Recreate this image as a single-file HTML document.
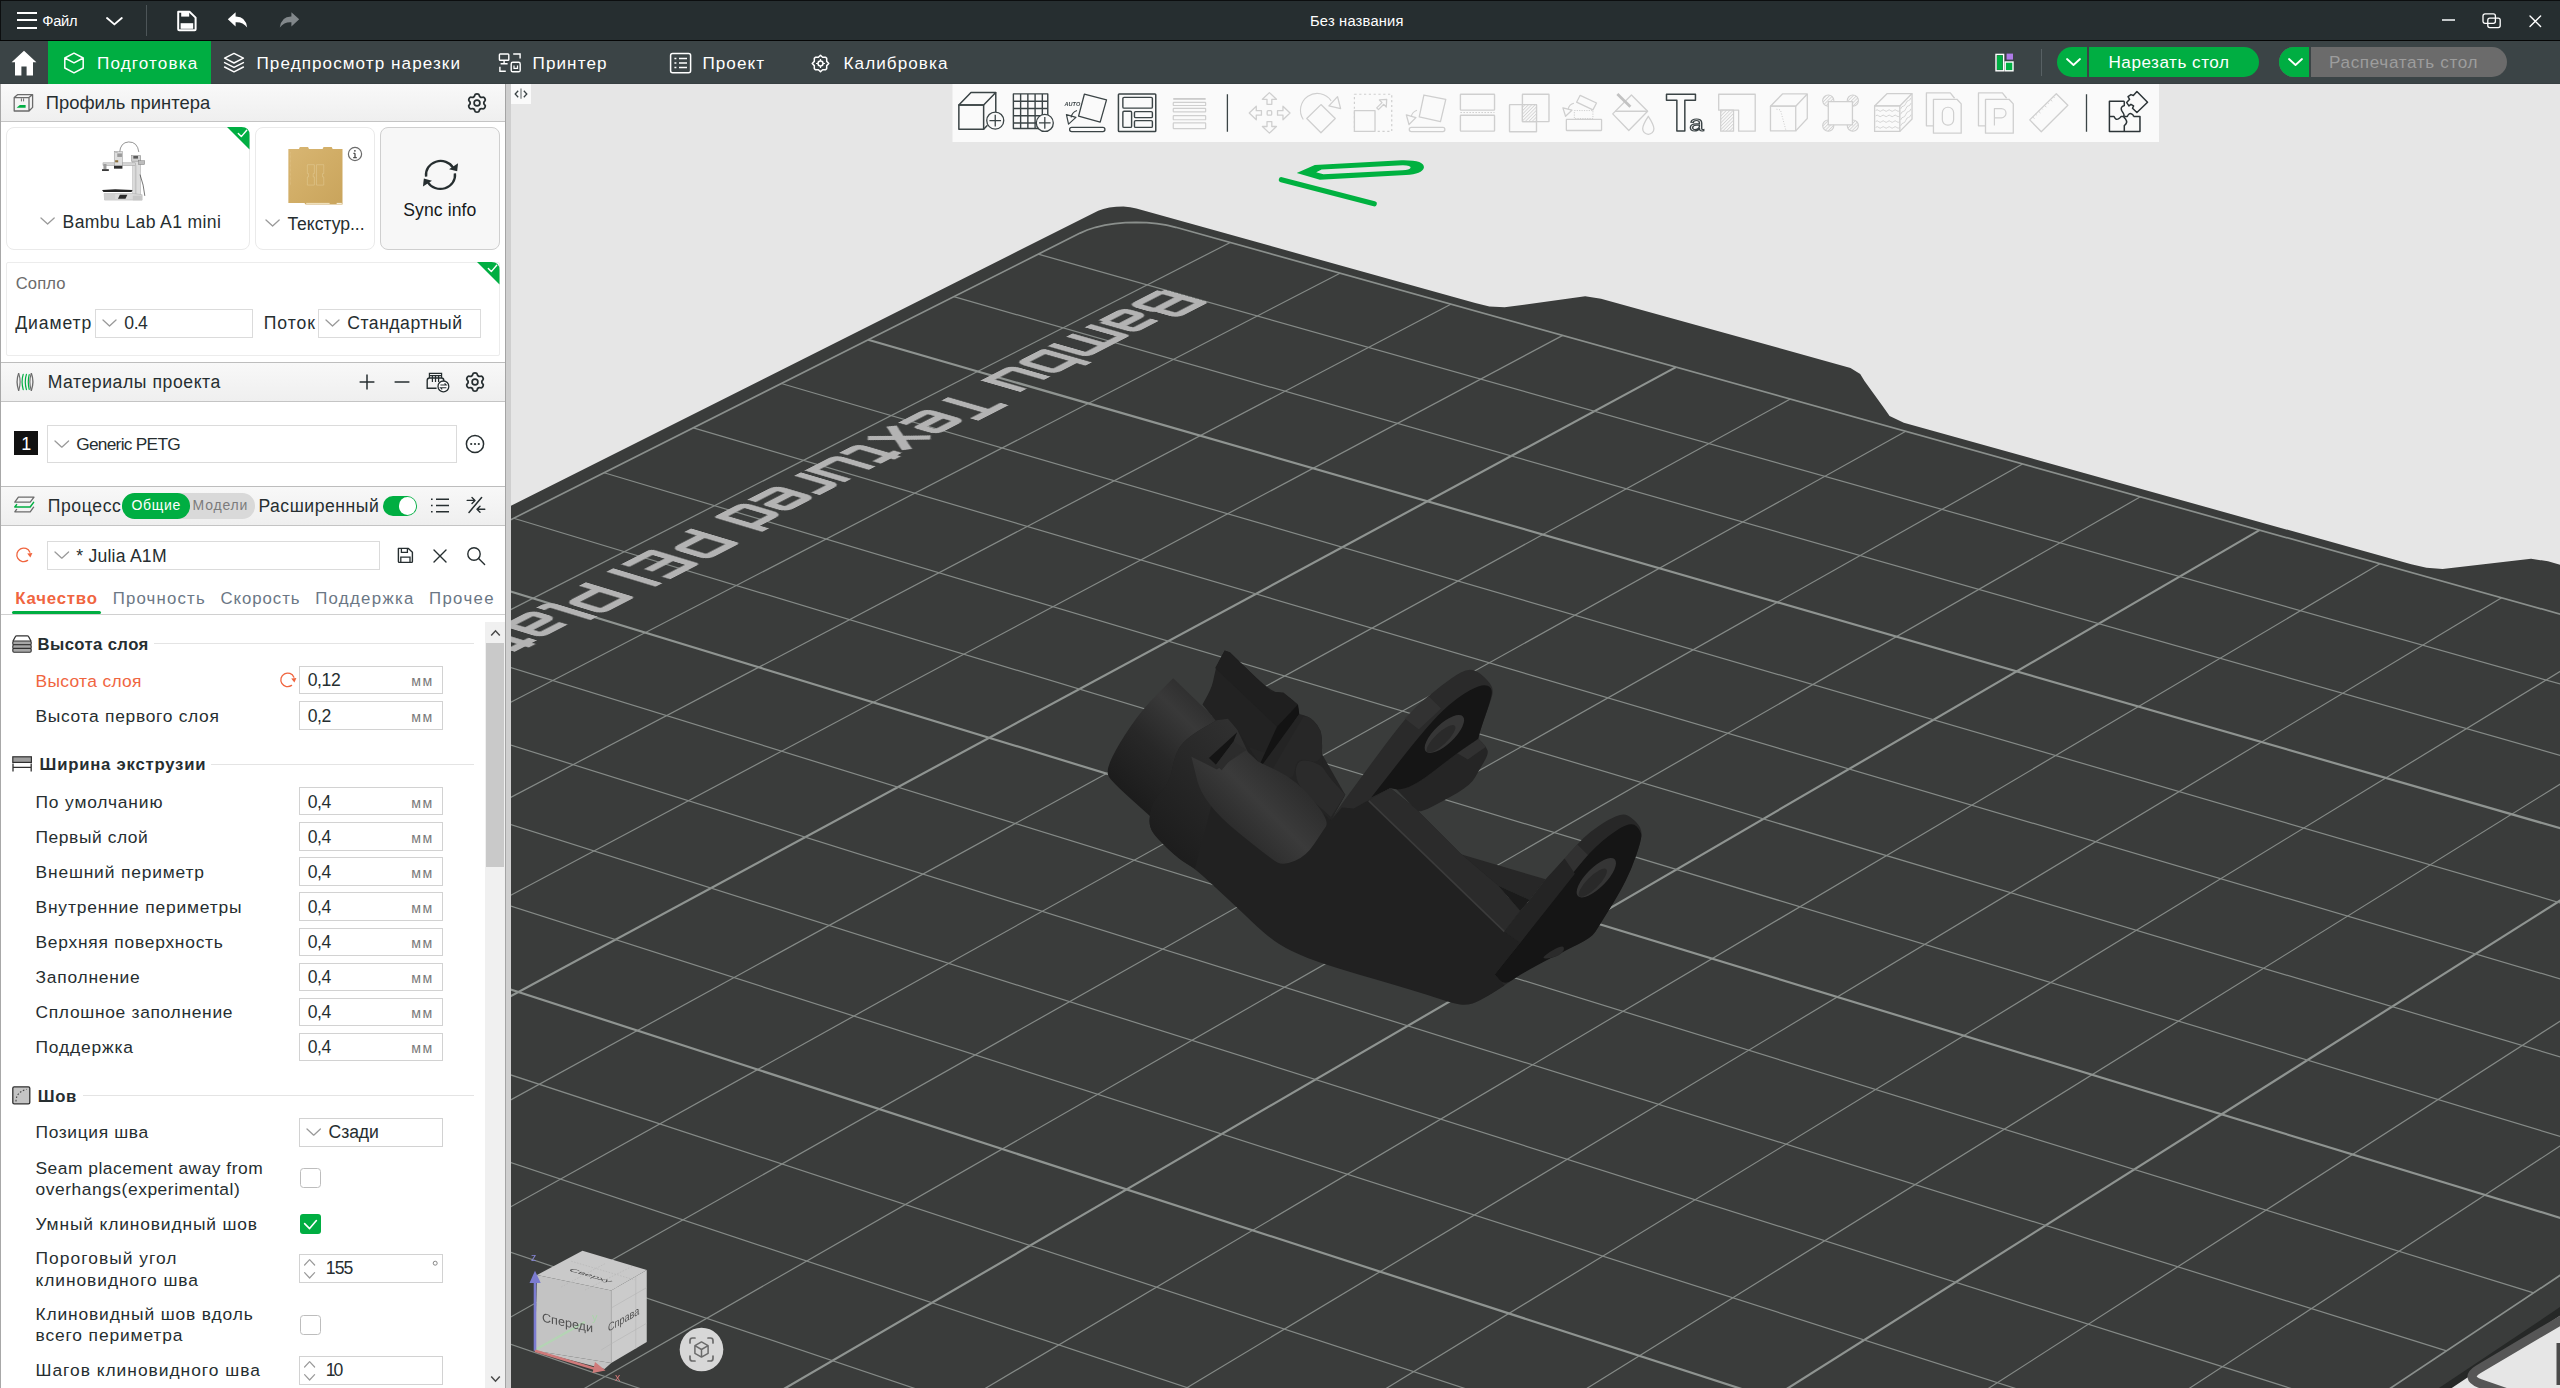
<!DOCTYPE html>
<html><head><meta charset="utf-8"><title>Bambu Studio</title><style>
html,body{margin:0;padding:0;}
body{width:2560px;height:1388px;overflow:hidden;position:relative;background:#e6e6e6;font-family:"Liberation Sans",sans-serif;}
.t{position:absolute;white-space:nowrap;}
.b{position:absolute;box-sizing:border-box;}
svg{overflow:visible;}
</style></head><body>
<div class="b" style="left:0.00px;top:0.00px;width:2560.00px;height:41.00px;background:#262e30;"></div>
<div class="b" style="left:0.00px;top:0.00px;width:2560.00px;height:1.00px;background:#0c0e0f;"></div>
<div class="b" style="left:0.00px;top:0.00px;width:1.00px;height:41.00px;background:#0c0e0f;"></div>
<div class="b" style="left:0.00px;top:40.00px;width:2560.00px;height:1.00px;background:#050606;"></div>
<div class="b" style="left:16.50px;top:12.20px;width:20.00px;height:2.00px;background:#fff;"></div>
<div class="b" style="left:16.50px;top:19.40px;width:20.00px;height:2.00px;background:#fff;"></div>
<div class="b" style="left:16.50px;top:26.60px;width:20.00px;height:2.00px;background:#fff;"></div>
<div class="t" style="left:42.20px;top:13px;font-size:14.70px;line-height:16px;height:16px;color:#fff;letter-spacing:-0.213px;">Файл</div>
<svg class="b" style="left:106.20px;top:17.30px;" width="16.8" height="8.4" viewBox="0 0 16.8 8.4"><polyline points="1,1 8.40,7.40 15.80,1" fill="none" stroke="#fff" stroke-width="1.9" stroke-linecap="round" stroke-linejoin="round"/></svg>
<div class="b" style="left:146.00px;top:5.00px;width:1.00px;height:31.00px;background:#4d5558;"></div>
<svg class="b" style="left:176.00px;top:10.00px;" width="22" height="22" viewBox="0 0 22 22"><path d="M2.2,1.8 H13.5 L19.6,7.6 V19.2 Q19.6,20.2 18.6,20.2 H3.2 Q2.2,20.2 2.2,19.2 Z" fill="none" stroke="#fff" stroke-width="2" stroke-linejoin="round"/><rect x="5.2" y="2" width="8" height="4.6" fill="#fff"/><rect x="4.6" y="13.2" width="12.6" height="5.6" fill="#fff"/></svg>
<svg class="b" style="left:227.00px;top:11.00px;" width="22" height="18" viewBox="0 0 22 18"><path d="M0.8,8.2 L8.6,1.2 V5.4 Q18.8,5.2 20.2,16.6 Q15.6,10.6 8.6,11.2 V15.4 Z" fill="#fff"/></svg>
<svg class="b" style="left:278.00px;top:11.00px;" width="22" height="18" viewBox="0 0 22 18"><path d="M21.2,8.2 L13.4,1.2 V5.4 Q3.2,5.2 1.8,16.6 Q6.4,10.6 13.4,11.2 V15.4 Z" fill="#82888b"/></svg>
<div class="t" style="left:1310.00px;top:13px;font-size:14.70px;line-height:16px;height:16px;color:#fff;letter-spacing:0.200px;">Без названия</div>
<div class="b" style="left:2442.00px;top:19.30px;width:13.00px;height:1.60px;background:#c4c8ca;"></div>
<svg class="b" style="left:2482.00px;top:13.00px;" width="20" height="16" viewBox="0 0 20 16"><rect x="1" y="0.9" width="12.4" height="9.4" rx="2" fill="none" stroke="#fff" stroke-width="1.3"/><rect x="5.8" y="5.2" width="12.4" height="9.4" rx="2" fill="none" stroke="#fff" stroke-width="1.3"/></svg>
<svg class="b" style="left:2528.50px;top:15.00px;" width="13" height="13" viewBox="0 0 13 13"><path d="M1,1 L11.6,11.6 M11.6,1 L1,11.6" stroke="#fff" stroke-width="1.4" stroke-linecap="round"/></svg>
<div class="b" style="left:0.00px;top:41.00px;width:2560.00px;height:43.00px;background:#3b4446;"></div>
<div class="b" style="left:0.00px;top:83.00px;width:2560.00px;height:1.00px;background:#373f41;"></div>
<svg class="b" style="left:10.50px;top:49.50px;" width="26" height="26" viewBox="0 0 26 26"><path d="M13,0.8 L25.4,12.2 H22 V25.4 H15.6 V16.4 H10.4 V25.4 H4 V12.2 H0.6 Z" fill="#fff"/></svg>
<div class="b" style="left:48.00px;top:41.00px;width:163.00px;height:43.00px;background:#00ae42;"></div>
<svg class="b" style="left:63.00px;top:52.00px;" width="22" height="22" viewBox="0 0 22 22"><path d="M11,1.2 L20.2,6 V16 L11,20.8 L1.8,16 V6 Z M1.8,6 L11,10.8 L20.2,6" fill="none" stroke="#fff" stroke-width="1.5" stroke-linejoin="round"/></svg>
<div class="t" style="left:97.00px;top:54px;font-size:17.10px;line-height:19px;height:19px;color:#fff;letter-spacing:1.135px;">Подготовка</div>
<svg class="b" style="left:223.00px;top:52.00px;" width="22" height="22" viewBox="0 0 22 22"><path d="M11,1.4 L20.4,6.2 L11,11 L1.6,6.2 Z" fill="none" stroke="#fff" stroke-width="1.5" stroke-linejoin="round"/><path d="M1.6,10.6 L11,15.4 L20.4,10.6 M1.6,15 L11,19.8 L20.4,15" fill="none" stroke="#fff" stroke-width="1.5" stroke-linejoin="round" stroke-linecap="round"/></svg>
<div class="t" style="left:256.50px;top:54px;font-size:17.10px;line-height:19px;height:19px;color:#fff;letter-spacing:1.070px;">Предпросмотр нарезки</div>
<svg class="b" style="left:498.00px;top:52.00px;" width="24" height="22" viewBox="0 0 24 22"><rect x="1.4" y="2" width="9.4" height="6.2" rx="0.8" fill="none" stroke="#fff" stroke-width="1.4"/><path d="M6.1,8.2 V11.6 M2.6,11.7 H9.6 M15.2,2 H22.1 V6.4 M1.9,14.7 V19.2 H7.8" fill="none" stroke="#fff" stroke-width="1.4"/><rect x="13.2" y="10.3" width="9" height="9.5" rx="1.6" fill="none" stroke="#fff" stroke-width="1.4"/><path d="M16,13.4 V16.4 H19.5 V13.4" fill="none" stroke="#fff" stroke-width="1.2"/></svg>
<div class="t" style="left:532.50px;top:54px;font-size:17.10px;line-height:19px;height:19px;color:#fff;letter-spacing:1.092px;">Принтер</div>
<svg class="b" style="left:669.00px;top:52.00px;" width="24" height="22" viewBox="0 0 24 22"><rect x="1.6" y="1.4" width="20" height="19.4" rx="2" fill="none" stroke="#fff" stroke-width="1.5"/><path d="M5.4,6.6 H7.4 M10,6.6 H18 M5.4,11.1 H7.4 M10,11.1 H18 M5.4,15.6 H7.4 M10,15.6 H18" stroke="#fff" stroke-width="1.5"/></svg>
<div class="t" style="left:702.50px;top:54px;font-size:17.10px;line-height:19px;height:19px;color:#fff;letter-spacing:1.036px;">Проект</div>
<svg class="b" style="left:811.00px;top:53.50px;" width="19" height="19" viewBox="0 0 19 19"><path d="M9.5,1.2 L11.6,3.3 H14.6 L15.7,4.4 V7.4 L17.8,9.5 L15.7,11.6 V14.6 L14.6,15.7 H11.6 L9.5,17.8 L7.4,15.7 H4.4 L3.3,14.6 V11.6 L1.2,9.5 L3.3,7.4 V4.4 L4.4,3.3 H7.4 Z" fill="none" stroke="#fff" stroke-width="1.5" stroke-linejoin="round"/><circle cx="9.5" cy="9.5" r="2.5" fill="none" stroke="#fff" stroke-width="1.5"/><path d="M9.5,5 V7 M9.5,12 V14 M5,9.5 H7 M12,9.5 H14" stroke="#fff" stroke-width="1.2"/></svg>
<div class="t" style="left:843.50px;top:54px;font-size:17.10px;line-height:19px;height:19px;color:#fff;letter-spacing:1.082px;">Калибровка</div>
<svg class="b" style="left:1994.50px;top:52.00px;" width="20" height="20" viewBox="0 0 20 20"><rect x="1" y="2.4" width="7.6" height="16.4" fill="none" stroke="#fff" stroke-width="1.4"/><rect x="2" y="3.4" width="5.6" height="14.4" fill="#00ae42"/><rect x="10.2" y="10" width="7.8" height="8.8" fill="#00ae42" stroke="#fff" stroke-width="1.4"/><rect x="11.6" y="1.6" width="6.4" height="6" fill="#af7be8"/></svg>
<div class="b" style="left:2041.00px;top:48.50px;width:1.00px;height:27.00px;background:#586164;"></div>
<div class="b" style="left:2056.50px;top:47.00px;width:202.50px;height:30.00px;background:#00ae42;border-radius:15px;"></div>
<div class="b" style="left:2086.50px;top:47.00px;width:2.50px;height:30.00px;background:#3b4446;"></div>
<svg class="b" style="left:2065.50px;top:57.50px;" width="15" height="8" viewBox="0 0 15 8"><polyline points="1,1 7.50,7.00 14.00,1" fill="none" stroke="#fff" stroke-width="1.8" stroke-linecap="round" stroke-linejoin="round"/></svg>
<div class="t" style="left:2108.50px;top:53px;font-size:17.10px;line-height:19px;height:19px;color:#fff;letter-spacing:0.520px;">Нарезать стол</div>
<div class="b" style="left:2278.50px;top:47.00px;width:228.00px;height:30.00px;background:#6b6b6b;border-radius:15px;"></div>
<div class="b" style="left:2278.50px;top:47.00px;width:30.00px;height:30.00px;background:#00ae42;border-radius:15px 0 0 15px;"></div>
<div class="b" style="left:2308.50px;top:47.00px;width:2.50px;height:30.00px;background:#3b4446;"></div>
<svg class="b" style="left:2287.50px;top:57.50px;" width="15" height="8" viewBox="0 0 15 8"><polyline points="1,1 7.50,7.00 14.00,1" fill="none" stroke="#fff" stroke-width="1.8" stroke-linecap="round" stroke-linejoin="round"/></svg>
<div class="t" style="left:2329.00px;top:53px;font-size:17.10px;line-height:19px;height:19px;color:#9d9d9d;letter-spacing:0.653px;">Распечатать стол</div>
<div class="b" style="left:0.00px;top:84.00px;width:505.00px;height:1304.00px;background:#fff;"></div>
<div class="b" style="left:0.00px;top:84.00px;width:1.20px;height:1304.00px;background:#a8a8a8;"></div>
<div class="b" style="left:505.00px;top:84.00px;width:6.00px;height:1304.00px;background:#cfcfcf;"></div>
<div class="b" style="left:505.00px;top:84.00px;width:1.00px;height:1304.00px;background:#a4a4a4;"></div>
<div class="b" style="left:1.00px;top:84.00px;width:504.00px;height:37.50px;background:linear-gradient(#f9f9f9,#efefef);border-bottom:1.5px solid #c4c4c4;"></div>
<svg class="b" style="left:12.50px;top:93.00px;" width="22" height="20" viewBox="0 0 22 20"><path d="M1.2,4.6 L4.8,1.6 H19.6 V14.4 L16,18 H1.2 Z M1.2,4.6 H16 V18 M16,4.6 L19.6,1.6" fill="none" stroke="#6b6b6b" stroke-width="1.3" stroke-linejoin="round"/><path d="M8.4,5.4 V8.4 M10.6,5.4 V8.4" stroke="#6b6b6b" stroke-width="1"/><path d="M3.6,14.8 L6.8,12 H12.6 V14.8 Z" fill="#00ae42"/></svg>
<div class="t" style="left:45.70px;top:92px;font-size:18.40px;line-height:21px;height:21px;color:#262e30;letter-spacing:0.033px;">Профиль принтера</div>
<svg class="b" style="left:467.30px;top:93.00px;" width="20" height="20" viewBox="0 0 20 20"><path d="M13.40,15.88 Q12.34,16.49 12.18,17.78 Q12.03,19.08 10.00,19.08 Q7.97,19.08 7.82,17.78 Q7.66,16.49 6.60,15.88 Q5.55,15.27 4.35,15.78 Q3.15,16.29 2.14,14.54 Q1.13,12.78 2.17,12.00 Q3.21,11.22 3.21,10.00 Q3.21,8.78 2.17,8.00 Q1.13,7.22 2.14,5.46 Q3.15,3.71 4.35,4.22 Q5.55,4.73 6.60,4.12 Q7.66,3.51 7.82,2.22 Q7.97,0.92 10.00,0.92 Q12.03,0.92 12.18,2.22 Q12.34,3.51 13.40,4.12 Q14.45,4.73 15.65,4.22 Q16.85,3.71 17.86,5.46 Q18.87,7.22 17.83,8.00 Q16.79,8.78 16.79,10.00 Q16.79,11.22 17.83,12.00 Q18.87,12.78 17.86,14.54 Q16.85,16.29 15.65,15.78 Q14.45,15.27 13.40,15.88 Z" fill="none" stroke="#262e30" stroke-width="1.8" stroke-linejoin="round"/><circle cx="10" cy="10" r="2.9" fill="none" stroke="#262e30" stroke-width="1.7"/></svg>
<div class="b" style="left:6.00px;top:127.00px;width:244.00px;height:123.00px;background:#fff;border:1.3px solid #eaeaea;border-radius:8px;"></div>
<svg class="b" style="left:226.70px;top:127.00px;" width="22.5" height="22.5" viewBox="0 0 22.5 22.5"><path d="M0,0 H14.5 Q22.5,0 22.5,8 V22.5 Z" fill="#00ae42"/><path d="M11.3,6.6 L14.3,9.6 L19.7,3.2" fill="none" stroke="#fff" stroke-width="1.4" stroke-linecap="round" stroke-linejoin="round"/></svg>
<div class="b" style="left:255.00px;top:127.00px;width:120.00px;height:123.00px;background:#fff;border:1.3px solid #eaeaea;border-radius:8px;"></div>
<div class="b" style="left:380.00px;top:127.00px;width:120.00px;height:123.00px;background:#f7f7f7;border:1.3px solid #cfcfcf;border-radius:8px;"></div>
<svg class="b" style="left:80.00px;top:130.00px;" width="300" height="120" viewBox="0 0 2560 1024">
<path d="M338,192 Q345,105 415,102 Q490,100 502,188" fill="none" stroke="#4a4a4a" stroke-width="5"/>
<rect x="450" y="222" width="68" height="350" fill="#dcdcdc" stroke="#a9a9a9" stroke-width="4"/>
<rect x="468" y="300" width="14" height="250" fill="#c4c4c4"/>
<rect x="438" y="218" width="78" height="48" fill="#cfcfcf" stroke="#8a8a8a" stroke-width="4"/>
<rect x="500" y="262" width="52" height="34" fill="#bdbdbd" stroke="#7a7a7a" stroke-width="4"/>
<rect x="455" y="222" width="40" height="22" fill="#5a5a5a"/>
<rect x="196" y="280" width="276" height="24" fill="#d6d6d6" stroke="#9a9a9a" stroke-width="4"/>
<rect x="292" y="184" width="70" height="122" fill="#dedede" stroke="#8f8f8f" stroke-width="4"/>
<rect x="300" y="180" width="22" height="16" fill="#bcbcbc"/>
<rect x="318" y="200" width="40" height="30" fill="#9a9a9a"/>
<rect x="300" y="258" width="26" height="18" fill="#8a6f3a"/>
<rect x="290" y="306" width="72" height="24" fill="#2e2e2e"/>
<rect x="200" y="290" width="26" height="46" fill="#9d9d9d"/>
<rect x="188" y="334" width="58" height="16" fill="#3a3a3a"/>
<path d="M512,380 Q545,470 553,562" fill="none" stroke="#3d3d3d" stroke-width="6"/>
<path d="M188,512 L300,505 L448,512 L440,528 L200,530 Z" fill="#222"/>
<path d="M206,542 H450 L530,552 V598 H210 Z" fill="#dadada" stroke="#a8a8a8" stroke-width="4"/>
<path d="M206,542 H300 V598 H210 Z" fill="#cfcfcf"/>
<path d="M340,552 H404 L388,586 H324 Z" fill="#2a2a2a"/>
<rect x="450" y="560" width="80" height="40" fill="#c6c6c6"/>
</svg>
<svg class="b" style="left:39.80px;top:217.30px;" width="15.2" height="8" viewBox="0 0 15.2 8"><polyline points="1,1 7.60,7.00 14.20,1" fill="none" stroke="#9a9a9a" stroke-width="1.3" stroke-linecap="round" stroke-linejoin="round"/></svg>
<div class="t" style="left:62.60px;top:212px;font-size:17.60px;line-height:20px;height:20px;color:#262e30;letter-spacing:0.360px;">Bambu Lab A1 mini</div>
<svg class="b" style="left:80.00px;top:130.00px;" width="300" height="120" viewBox="0 0 2560 1024">
<defs><linearGradient id="gold" x1="0" y1="0" x2="1" y2="1"><stop offset="0" stop-color="#d8b673"/><stop offset="0.5" stop-color="#d1ad66"/><stop offset="1" stop-color="#c9a45c"/></linearGradient></defs>
<path d="M1778,162 H1868 L1876,146 H1946 L1954,162 H2070 L2078,146 H2148 L2156,162 H2240 V636 H1925 L1915,622 H1778 Z" fill="url(#gold)"/>
<path d="M1940,296 H2000 V372 H1990 V400 H2000 V470 H1940 V400 H1950 V372 H1940 Z M2018,296 H2080 V372 H2070 V400 H2080 V470 H2018 Z" fill="none" stroke="#e6d09c" stroke-width="4"/>
<rect x="1930" y="622" width="200" height="10" fill="#efe0bb"/>
<rect x="2190" y="622" width="44" height="10" fill="#f7efda"/>
<path d="M1796,190 V470" stroke="#e2c78c" stroke-width="5" stroke-dasharray="6 5"/>
</svg>
<svg class="b" style="left:347.00px;top:146.00px;" width="16" height="16" viewBox="0 0 16 16"><circle cx="8" cy="8" r="6.6" fill="#fff" stroke="#6b6b6b" stroke-width="1.2"/><path d="M8,7.2 V11.4 M6.4,7.4 H8 M6.2,11.6 H9.8" stroke="#4b4b4b" stroke-width="1.3" fill="none"/><circle cx="7.9" cy="4.8" r="0.9" fill="#4b4b4b"/></svg>
<svg class="b" style="left:265.00px;top:219.30px;" width="15.2" height="8" viewBox="0 0 15.2 8"><polyline points="1,1 7.60,7.00 14.20,1" fill="none" stroke="#9a9a9a" stroke-width="1.3" stroke-linecap="round" stroke-linejoin="round"/></svg>
<div class="t" style="left:287.40px;top:214px;font-size:17.60px;line-height:20px;height:20px;color:#262e30;letter-spacing:-0.042px;">Текстур...</div>
<svg class="b" style="left:417.50px;top:158.20px;" width="45" height="34" viewBox="0 0 45 34"><g transform="scale(1.125,1.06)"><path d="M7.2,17.5 A13,13 0 0 1 31.4,9.4" fill="none" stroke="#262e30" stroke-width="2.1"/><path d="M32.8,14.5 A13,13 0 0 1 8.6,22.6" fill="none" stroke="#262e30" stroke-width="2.1"/><path d="M27.6,10.6 L34.8,12.6 L35.6,5 Z" fill="#262e30"/><path d="M12.4,21.4 L5.2,19.4 L4.4,27 Z" fill="#262e30"/></g></svg>
<div class="t" style="left:403.20px;top:200px;font-size:17.60px;line-height:20px;height:20px;color:#15191b;letter-spacing:0.088px;">Sync info</div>
<div class="b" style="left:6.00px;top:262.00px;width:494.00px;height:93.50px;background:#fff;border:1.3px solid #ececec;border-radius:2px;"></div>
<svg class="b" style="left:476.70px;top:262.00px;" width="22.5" height="22.5" viewBox="0 0 22.5 22.5"><path d="M0,0 H14.5 Q22.5,0 22.5,8 V22.5 Z" fill="#00ae42"/><path d="M11.3,6.6 L14.3,9.6 L19.7,3.2" fill="none" stroke="#fff" stroke-width="1.4" stroke-linecap="round" stroke-linejoin="round"/></svg>
<div class="t" style="left:15.80px;top:274px;font-size:16.60px;line-height:19px;height:19px;color:#6b6b6b;letter-spacing:0.073px;">Сопло</div>
<div class="t" style="left:15.20px;top:313px;font-size:17.60px;line-height:20px;height:20px;color:#262e30;letter-spacing:0.917px;">Диаметр</div>
<div class="b" style="left:95.00px;top:309.10px;width:158.00px;height:28.50px;background:#fff;border:1.3px solid #dbdbdb;"></div>
<svg class="b" style="left:102.20px;top:319.30px;" width="15" height="8" viewBox="0 0 15 8"><polyline points="1,1 7.50,7.00 14.00,1" fill="none" stroke="#9a9a9a" stroke-width="1.3" stroke-linecap="round" stroke-linejoin="round"/></svg>
<div class="t" style="left:124.30px;top:313px;font-size:17.60px;line-height:20px;height:20px;color:#262e30;letter-spacing:-0.436px;">0.4</div>
<div class="t" style="left:263.70px;top:313px;font-size:17.60px;line-height:20px;height:20px;color:#262e30;letter-spacing:0.947px;">Поток</div>
<div class="b" style="left:318.30px;top:309.10px;width:162.50px;height:28.50px;background:#fff;border:1.3px solid #dbdbdb;"></div>
<svg class="b" style="left:325.00px;top:319.30px;" width="15" height="8" viewBox="0 0 15 8"><polyline points="1,1 7.50,7.00 14.00,1" fill="none" stroke="#9a9a9a" stroke-width="1.3" stroke-linecap="round" stroke-linejoin="round"/></svg>
<div class="t" style="left:347.30px;top:313px;font-size:17.60px;line-height:20px;height:20px;color:#262e30;letter-spacing:0.499px;">Стандартный</div>
<div class="b" style="left:1.00px;top:362.00px;width:504.00px;height:40.00px;background:linear-gradient(#f8f8f8,#efefef);border-top:1.5px solid #bdbdbd;border-bottom:1.5px solid #c4c4c4;"></div>
<svg class="b" style="left:15.00px;top:372.00px;" width="20" height="20" viewBox="0 0 20 20"><path d="M3.6,1.6 Q0.6,9.5 3.6,18.4 M16.4,1.6 Q19.4,9.5 16.4,18.4" fill="none" stroke="#6b6b6b" stroke-width="1.3" stroke-linecap="round"/><path d="M3.8,1.6 Q6.4,9.5 3.8,18.4 M16.2,1.6 Q13.6,9.5 16.2,18.4" fill="none" stroke="#6b6b6b" stroke-width="1.1" stroke-linecap="round"/><path d="M8.2,2.4 Q6,9.5 8.2,17.6 M11.4,2.4 Q9.2,9.5 11.4,17.6 M14.2,2.6 Q12.4,9.5 14.2,17.4" fill="none" stroke="#00ae42" stroke-width="1.2" stroke-linecap="round"/></svg>
<div class="t" style="left:47.70px;top:372px;font-size:17.60px;line-height:20px;height:20px;color:#262e30;letter-spacing:0.569px;">Материалы проекта</div>
<svg class="b" style="left:359.00px;top:374.00px;" width="16" height="16" viewBox="0 0 16 16"><path d="M8,0.6 V15.4 M0.6,8 H15.4" stroke="#262e30" stroke-width="1.5"/></svg>
<svg class="b" style="left:394.00px;top:374.00px;" width="16" height="16" viewBox="0 0 16 16"><path d="M0.6,8 H15.4" stroke="#262e30" stroke-width="1.5"/></svg>
<svg class="b" style="left:426.00px;top:371.50px;" width="25" height="21" viewBox="0 0 25 21"><path d="M2.4,16.2 H1.2 V8.6 Q1.2,6 3.6,6 H15.4 Q17.8,6 17.8,8.6 V10.4 M1.2,16.2 H10.6" fill="none" stroke="#262e30" stroke-width="1.4"/><path d="M3.4,6 V1.4 H15.6 V6 M3.4,3.6 H15.6 M6.4,3.6 V10 M9.5,3.6 V10 M12.6,3.6 V10" fill="none" stroke="#262e30" stroke-width="1.2"/><circle cx="17.4" cy="14.4" r="5.4" fill="#fff" stroke="#262e30" stroke-width="1.3"/><path d="M14.4,13 H20.2 L18.6,11.4 M20.4,15.8 H14.6 L16.2,17.4" fill="none" stroke="#262e30" stroke-width="1.1"/></svg>
<svg class="b" style="left:465.30px;top:372.00px;" width="20" height="20" viewBox="0 0 20 20"><path d="M13.40,15.88 Q12.34,16.49 12.18,17.78 Q12.03,19.08 10.00,19.08 Q7.97,19.08 7.82,17.78 Q7.66,16.49 6.60,15.88 Q5.55,15.27 4.35,15.78 Q3.15,16.29 2.14,14.54 Q1.13,12.78 2.17,12.00 Q3.21,11.22 3.21,10.00 Q3.21,8.78 2.17,8.00 Q1.13,7.22 2.14,5.46 Q3.15,3.71 4.35,4.22 Q5.55,4.73 6.60,4.12 Q7.66,3.51 7.82,2.22 Q7.97,0.92 10.00,0.92 Q12.03,0.92 12.18,2.22 Q12.34,3.51 13.40,4.12 Q14.45,4.73 15.65,4.22 Q16.85,3.71 17.86,5.46 Q18.87,7.22 17.83,8.00 Q16.79,8.78 16.79,10.00 Q16.79,11.22 17.83,12.00 Q18.87,12.78 17.86,14.54 Q16.85,16.29 15.65,15.78 Q14.45,15.27 13.40,15.88 Z" fill="none" stroke="#262e30" stroke-width="1.8" stroke-linejoin="round"/><circle cx="10" cy="10" r="2.9" fill="none" stroke="#262e30" stroke-width="1.7"/></svg>
<div class="b" style="left:13.80px;top:430.80px;width:24.20px;height:24.20px;background:#111;"></div>
<div class="t" style="left:21.20px;top:434px;font-size:18.00px;line-height:20px;height:20px;color:#fff;">1</div>
<div class="b" style="left:47.00px;top:425.00px;width:410.00px;height:38.00px;background:#fff;border:1.3px solid #dbdbdb;"></div>
<svg class="b" style="left:53.80px;top:440.40px;" width="15.6" height="8.2" viewBox="0 0 15.6 8.2"><polyline points="1,1 7.80,7.20 14.60,1" fill="none" stroke="#9a9a9a" stroke-width="1.3" stroke-linecap="round" stroke-linejoin="round"/></svg>
<div class="t" style="left:76.20px;top:434px;font-size:17.30px;line-height:20px;height:20px;color:#262e30;letter-spacing:-0.716px;">Generic PETG</div>
<svg class="b" style="left:465.00px;top:434.00px;" width="20" height="20" viewBox="0 0 20 20"><circle cx="10" cy="10" r="8.6" fill="none" stroke="#262e30" stroke-width="1.5"/><circle cx="6.2" cy="10" r="1.1" fill="#262e30"/><circle cx="10" cy="10" r="1.1" fill="#262e30"/><circle cx="13.8" cy="10" r="1.1" fill="#262e30"/></svg>
<div class="b" style="left:1.00px;top:486.00px;width:504.00px;height:40.00px;background:linear-gradient(#f8f8f8,#efefef);border-top:1.5px solid #bdbdbd;border-bottom:1.5px solid #c4c4c4;"></div>
<svg class="b" style="left:14.00px;top:496.00px;" width="22" height="19" viewBox="0 0 22 19"><path d="M4.4,1.2 H20 L16.2,6.2 H0.8 Z" fill="none" stroke="#6b6b6b" stroke-width="1.3" stroke-linejoin="round"/><path d="M19.6,6.4 L16.2,11 H0.8 L2.6,8.6" fill="none" stroke="#00ae42" stroke-width="1.5" stroke-linejoin="round" stroke-linecap="round"/><path d="M19.6,11.2 L16.2,15.8 H0.8 L2.6,13.4" fill="none" stroke="#6b6b6b" stroke-width="1.3" stroke-linejoin="round" stroke-linecap="round"/></svg>
<div class="t" style="left:47.70px;top:496px;font-size:17.60px;line-height:20px;height:20px;color:#262e30;letter-spacing:0.616px;">Процесс</div>
<div class="b" style="left:121.90px;top:493.20px;width:133.10px;height:25.40px;background:#d9d9d9;border-radius:12.7px;"></div>
<div class="b" style="left:121.90px;top:493.20px;width:68.10px;height:25.40px;background:#00ae42;border-radius:12.7px;"></div>
<div class="t" style="left:131.60px;top:497px;font-size:14.00px;line-height:16px;height:16px;color:#fff;letter-spacing:0.641px;">Общие</div>
<div class="t" style="left:192.60px;top:497px;font-size:14.00px;line-height:16px;height:16px;color:#7c7c7c;letter-spacing:0.805px;">Модели</div>
<div class="t" style="left:258.40px;top:496px;font-size:17.60px;line-height:20px;height:20px;color:#262e30;letter-spacing:0.520px;">Расширенный</div>
<div class="b" style="left:382.90px;top:495.80px;width:34.50px;height:20.40px;background:#00ae42;border-radius:10.2px;"></div>
<div class="b" style="left:398.60px;top:497.40px;width:17.20px;height:17.20px;background:#fff;border-radius:50%;"></div>
<svg class="b" style="left:430.00px;top:497.00px;" width="20" height="17" viewBox="0 0 20 17"><path d="M1,2.2 H2.6 M6,2.2 H19 M1,8.5 H2.6 M6,8.5 H19 M1,14.8 H2.6 M6,14.8 H19" stroke="#262e30" stroke-width="1.6"/></svg>
<svg class="b" style="left:465.50px;top:496.00px;" width="20" height="18" viewBox="0 0 20 18"><path d="M15.6,1.6 L3,16.4" stroke="#262e30" stroke-width="1.5" stroke-linecap="round"/><path d="M1.2,4.4 H8.8 M6,1.4 L9,4.4 L6,7.4" fill="none" stroke="#262e30" stroke-width="1.4" stroke-linecap="round" stroke-linejoin="round"/><path d="M18.8,13.2 H11.2 M14,10.2 L11,13.2 L14,16.2" fill="none" stroke="#262e30" stroke-width="1.4" stroke-linecap="round" stroke-linejoin="round"/></svg>
<svg class="b" style="left:15.00px;top:546.00px;" width="18" height="18" viewBox="0 0 18 18"><path d="M12.6,14.4 A6.8,6.8 0 1 1 14.9,6.2" fill="none" stroke="#f0653f" stroke-width="1.3" stroke-linecap="round"/><path d="M12.2,7.4 L17.4,7 L15.4,11.4 Z" fill="#f0653f"/></svg>
<div class="b" style="left:47.00px;top:541.00px;width:333.00px;height:29.00px;background:#fff;border:1.3px solid #dbdbdb;"></div>
<svg class="b" style="left:53.80px;top:550.70px;" width="15.6" height="8.2" viewBox="0 0 15.6 8.2"><polyline points="1,1 7.80,7.20 14.60,1" fill="none" stroke="#9a9a9a" stroke-width="1.3" stroke-linecap="round" stroke-linejoin="round"/></svg>
<div class="t" style="left:76.20px;top:546px;font-size:17.60px;line-height:20px;height:20px;color:#262e30;letter-spacing:0.235px;">* Julia A1M</div>
<svg class="b" style="left:396.50px;top:546.50px;" width="17" height="17" viewBox="0 0 17 17"><path d="M1.4,1.4 H11.4 L15.4,5.2 V14.6 Q15.4,15.4 14.6,15.4 H2.2 Q1.4,15.4 1.4,14.6 Z" fill="none" stroke="#262e30" stroke-width="1.4" stroke-linejoin="round"/><path d="M4.4,1.6 V5.4 H10.4 V1.6 M3.8,15.2 V10.2 H13 V15.2" fill="none" stroke="#262e30" stroke-width="1.3"/></svg>
<svg class="b" style="left:433.00px;top:548.50px;" width="14" height="14" viewBox="0 0 14 14"><path d="M1,1 L13,13 M13,1 L1,13" stroke="#262e30" stroke-width="1.4" stroke-linecap="round"/></svg>
<svg class="b" style="left:465.50px;top:546.00px;" width="20" height="20" viewBox="0 0 20 20"><circle cx="8" cy="8" r="6.2" fill="none" stroke="#262e30" stroke-width="1.4"/><path d="M12.6,12.6 L18.6,18.6" stroke="#262e30" stroke-width="1.4" stroke-linecap="round"/></svg>
<div class="t" style="left:15.20px;top:589px;font-size:16.80px;line-height:19px;height:19px;color:#f0653f;font-weight:700;letter-spacing:0.815px;">Качество</div>
<div class="t" style="left:112.70px;top:589px;font-size:16.80px;line-height:19px;height:19px;color:#6b7785;letter-spacing:1.185px;">Прочность</div>
<div class="t" style="left:220.40px;top:589px;font-size:16.80px;line-height:19px;height:19px;color:#6b7785;letter-spacing:0.950px;">Скорость</div>
<div class="t" style="left:315.20px;top:589px;font-size:16.80px;line-height:19px;height:19px;color:#6b7785;letter-spacing:1.320px;">Поддержка</div>
<div class="t" style="left:429.00px;top:589px;font-size:16.80px;line-height:19px;height:19px;color:#6b7785;letter-spacing:1.353px;">Прочее</div>
<div class="b" style="left:12.20px;top:610.80px;width:88.80px;height:3.00px;background:#00ae42;border-radius:1.5px;"></div>
<div class="b" style="left:1.00px;top:613.60px;width:504.00px;height:1.20px;background:#d0d0d0;"></div>
<div class="b" style="left:485.00px;top:622.00px;width:19.50px;height:766.00px;background:#f0f0f0;"></div>
<div class="b" style="left:485.50px;top:642.50px;width:18.50px;height:224.50px;background:#c9c9c9;"></div>
<svg class="b" style="left:489.50px;top:628.50px;" width="11" height="8" viewBox="0 0 11 8"><path d="M1.2,6.6 L5.5,1.8 L9.8,6.6" fill="none" stroke="#4a4a4a" stroke-width="1.5"/></svg>
<svg class="b" style="left:489.50px;top:1374.50px;" width="11" height="8" viewBox="0 0 11 8"><path d="M1.2,1.4 L5.5,6.2 L9.8,1.4" fill="none" stroke="#4a4a4a" stroke-width="1.5"/></svg>
<svg class="b" style="left:12.00px;top:634.50px;" width="20" height="18" viewBox="0 0 20 18"><path d="M0.9,6.2 L3.4,1.6 Q3.8,0.8 4.8,0.8 H15.2 Q16.2,0.8 16.6,1.6 L19.1,6.2" fill="#fff" stroke="#303030" stroke-width="1.2"/><rect x="0.8" y="6" width="18.4" height="3.9" rx="1.2" fill="#a6a6a6" stroke="#303030" stroke-width="1.1"/><rect x="0.8" y="9.7" width="18.4" height="3.9" rx="1.2" fill="#a6a6a6" stroke="#303030" stroke-width="1.1"/><rect x="0.8" y="13.4" width="18.4" height="3.9" rx="1.2" fill="#a6a6a6" stroke="#303030" stroke-width="1.1"/></svg>
<div class="t" style="left:37.60px;top:635px;font-size:16.70px;line-height:19px;height:19px;color:#262e30;font-weight:700;letter-spacing:0.380px;">Высота слоя</div>
<div class="b" style="left:154.40px;top:642.70px;width:319.60px;height:1.20px;background:#e4e4e4;"></div>
<svg class="b" style="left:12.00px;top:756.20px;" width="20.4" height="16.4" viewBox="0 0 20.4 16.4"><rect x="0.8" y="0.8" width="18.6" height="5.6" fill="#9d9d9d" stroke="#303030" stroke-width="1.2"/><path d="M1,7.4 V15.6 M19.2,7.4 V15.6 M1,11.4 H19.2" stroke="#303030" stroke-width="1.3"/></svg>
<div class="t" style="left:39.60px;top:755px;font-size:16.70px;line-height:19px;height:19px;color:#262e30;font-weight:700;letter-spacing:0.785px;">Ширина экструзии</div>
<div class="b" style="left:211.00px;top:763.60px;width:263.00px;height:1.20px;background:#e4e4e4;"></div>
<svg class="b" style="left:12.30px;top:1086.30px;" width="18.6" height="18.6" viewBox="0 0 18.6 18.6"><rect x="0.8" y="0.8" width="17" height="17" rx="1.4" fill="#c4c4c4" stroke="#303030" stroke-width="1.3"/><path d="M4,15.4 Q4,6 14.6,3.4" fill="none" stroke="#404040" stroke-width="1.1" stroke-dasharray="1.6 1.8"/></svg>
<div class="t" style="left:37.80px;top:1087px;font-size:16.70px;line-height:19px;height:19px;color:#262e30;font-weight:700;letter-spacing:0.626px;">Шов</div>
<div class="b" style="left:82.70px;top:1095.20px;width:391.30px;height:1.20px;background:#e4e4e4;"></div>
<div class="t" style="left:35.50px;top:671px;font-size:17.40px;line-height:20px;height:20px;color:#f0653f;letter-spacing:0.336px;">Высота слоя</div>
<svg class="b" style="left:278.50px;top:671.30px;" width="18" height="18" viewBox="0 0 18 18"><path d="M12.6,14.4 A6.8,6.8 0 1 1 14.9,6.2" fill="none" stroke="#f0653f" stroke-width="1.3" stroke-linecap="round"/><path d="M12.2,7.4 L17.4,7 L15.4,11.4 Z" fill="#f0653f"/></svg>
<div class="b" style="left:299.00px;top:666.20px;width:143.80px;height:28.20px;background:#fff;border:1.3px solid #d2d2d2;"></div>
<div class="t" style="left:307.70px;top:670px;font-size:17.60px;line-height:20px;height:20px;color:#262e30;letter-spacing:-0.387px;">0,12</div>
<div class="t" style="left:411.30px;top:673px;font-size:14.20px;line-height:16px;height:16px;color:#7a7a7a;letter-spacing:1.475px;">мм</div>
<div class="t" style="left:35.50px;top:706px;font-size:17.40px;line-height:20px;height:20px;color:#262e30;letter-spacing:0.709px;">Высота первого слоя</div>
<div class="b" style="left:299.00px;top:701.40px;width:143.80px;height:28.20px;background:#fff;border:1.3px solid #d2d2d2;"></div>
<div class="t" style="left:307.70px;top:706px;font-size:17.60px;line-height:20px;height:20px;color:#262e30;letter-spacing:-0.436px;">0,2</div>
<div class="t" style="left:411.30px;top:709px;font-size:14.20px;line-height:16px;height:16px;color:#7a7a7a;letter-spacing:1.475px;">мм</div>
<div class="t" style="left:35.50px;top:792px;font-size:17.40px;line-height:20px;height:20px;color:#262e30;letter-spacing:0.847px;">По умолчанию</div>
<div class="b" style="left:299.00px;top:787.30px;width:143.80px;height:28.20px;background:#fff;border:1.3px solid #d2d2d2;"></div>
<div class="t" style="left:307.70px;top:792px;font-size:17.60px;line-height:20px;height:20px;color:#262e30;letter-spacing:-0.436px;">0,4</div>
<div class="t" style="left:411.30px;top:795px;font-size:14.20px;line-height:16px;height:16px;color:#7a7a7a;letter-spacing:1.475px;">мм</div>
<div class="t" style="left:35.50px;top:827px;font-size:17.40px;line-height:20px;height:20px;color:#262e30;letter-spacing:0.578px;">Первый слой</div>
<div class="b" style="left:299.00px;top:822.35px;width:143.80px;height:28.20px;background:#fff;border:1.3px solid #d2d2d2;"></div>
<div class="t" style="left:307.70px;top:827px;font-size:17.60px;line-height:20px;height:20px;color:#262e30;letter-spacing:-0.436px;">0,4</div>
<div class="t" style="left:411.30px;top:830px;font-size:14.20px;line-height:16px;height:16px;color:#7a7a7a;letter-spacing:1.475px;">мм</div>
<div class="t" style="left:35.50px;top:862px;font-size:17.40px;line-height:20px;height:20px;color:#262e30;letter-spacing:0.837px;">Внешний периметр</div>
<div class="b" style="left:299.00px;top:857.40px;width:143.80px;height:28.20px;background:#fff;border:1.3px solid #d2d2d2;"></div>
<div class="t" style="left:307.70px;top:862px;font-size:17.60px;line-height:20px;height:20px;color:#262e30;letter-spacing:-0.436px;">0,4</div>
<div class="t" style="left:411.30px;top:865px;font-size:14.20px;line-height:16px;height:16px;color:#7a7a7a;letter-spacing:1.475px;">мм</div>
<div class="t" style="left:35.50px;top:897px;font-size:17.40px;line-height:20px;height:20px;color:#262e30;letter-spacing:0.831px;">Внутренние периметры</div>
<div class="b" style="left:299.00px;top:892.45px;width:143.80px;height:28.20px;background:#fff;border:1.3px solid #d2d2d2;"></div>
<div class="t" style="left:307.70px;top:897px;font-size:17.60px;line-height:20px;height:20px;color:#262e30;letter-spacing:-0.436px;">0,4</div>
<div class="t" style="left:411.30px;top:900px;font-size:14.20px;line-height:16px;height:16px;color:#7a7a7a;letter-spacing:1.475px;">мм</div>
<div class="t" style="left:35.50px;top:932px;font-size:17.40px;line-height:20px;height:20px;color:#262e30;letter-spacing:0.761px;">Верхняя поверхность</div>
<div class="b" style="left:299.00px;top:927.50px;width:143.80px;height:28.20px;background:#fff;border:1.3px solid #d2d2d2;"></div>
<div class="t" style="left:307.70px;top:932px;font-size:17.60px;line-height:20px;height:20px;color:#262e30;letter-spacing:-0.436px;">0,4</div>
<div class="t" style="left:411.30px;top:935px;font-size:14.20px;line-height:16px;height:16px;color:#7a7a7a;letter-spacing:1.475px;">мм</div>
<div class="t" style="left:35.50px;top:967px;font-size:17.40px;line-height:20px;height:20px;color:#262e30;letter-spacing:0.771px;">Заполнение</div>
<div class="b" style="left:299.00px;top:962.55px;width:143.80px;height:28.20px;background:#fff;border:1.3px solid #d2d2d2;"></div>
<div class="t" style="left:307.70px;top:967px;font-size:17.60px;line-height:20px;height:20px;color:#262e30;letter-spacing:-0.436px;">0,4</div>
<div class="t" style="left:411.30px;top:970px;font-size:14.20px;line-height:16px;height:16px;color:#7a7a7a;letter-spacing:1.475px;">мм</div>
<div class="t" style="left:35.50px;top:1002px;font-size:17.40px;line-height:20px;height:20px;color:#262e30;letter-spacing:0.694px;">Сплошное заполнение</div>
<div class="b" style="left:299.00px;top:997.60px;width:143.80px;height:28.20px;background:#fff;border:1.3px solid #d2d2d2;"></div>
<div class="t" style="left:307.70px;top:1002px;font-size:17.60px;line-height:20px;height:20px;color:#262e30;letter-spacing:-0.436px;">0,4</div>
<div class="t" style="left:411.30px;top:1005px;font-size:14.20px;line-height:16px;height:16px;color:#7a7a7a;letter-spacing:1.475px;">мм</div>
<div class="t" style="left:35.50px;top:1037px;font-size:17.40px;line-height:20px;height:20px;color:#262e30;letter-spacing:0.840px;">Поддержка</div>
<div class="b" style="left:299.00px;top:1032.65px;width:143.80px;height:28.20px;background:#fff;border:1.3px solid #d2d2d2;"></div>
<div class="t" style="left:307.70px;top:1037px;font-size:17.60px;line-height:20px;height:20px;color:#262e30;letter-spacing:-0.436px;">0,4</div>
<div class="t" style="left:411.30px;top:1040px;font-size:14.20px;line-height:16px;height:16px;color:#7a7a7a;letter-spacing:1.475px;">мм</div>
<div class="t" style="left:35.50px;top:1122px;font-size:17.40px;line-height:20px;height:20px;color:#262e30;letter-spacing:0.638px;">Позиция шва</div>
<div class="b" style="left:299.00px;top:1118.40px;width:143.80px;height:28.30px;background:#fff;border:1.3px solid #d2d2d2;"></div>
<svg class="b" style="left:305.60px;top:1128.20px;" width="15.4" height="8.2" viewBox="0 0 15.4 8.2"><polyline points="1,1 7.70,7.20 14.40,1" fill="none" stroke="#9a9a9a" stroke-width="1.3" stroke-linecap="round" stroke-linejoin="round"/></svg>
<div class="t" style="left:328.50px;top:1122px;font-size:17.60px;line-height:20px;height:20px;color:#262e30;letter-spacing:-0.068px;">Сзади</div>
<div class="t" style="left:35.50px;top:1158px;font-size:17.40px;line-height:20px;height:20px;color:#262e30;letter-spacing:0.505px;">Seam placement away from</div>
<div class="t" style="left:35.50px;top:1179px;font-size:17.40px;line-height:20px;height:20px;color:#262e30;letter-spacing:0.542px;">overhangs(experimental)</div>
<div class="b" style="left:300.20px;top:1167.50px;width:20.50px;height:20.20px;background:#fff;border:1.5px solid #bdbdbd;border-radius:3.5px;"></div>
<div class="t" style="left:35.50px;top:1214px;font-size:17.40px;line-height:20px;height:20px;color:#262e30;letter-spacing:0.858px;">Умный клиновидный шов</div>
<div class="b" style="left:300.20px;top:1213.60px;width:20.50px;height:20.20px;background:#00ae42;border-radius:3px;"></div>
<svg class="b" style="left:300.20px;top:1213.60px;" width="20.5" height="20.2" viewBox="0 0 20.5 20.2"><path d="M4.6,9.6 L9.6,14.6 L16.4,6.6" fill="none" stroke="#fff" stroke-width="1.6" stroke-linecap="round" stroke-linejoin="round"/></svg>
<div class="t" style="left:35.50px;top:1248px;font-size:17.40px;line-height:20px;height:20px;color:#262e30;letter-spacing:1.038px;">Пороговый угол</div>
<div class="t" style="left:35.50px;top:1270px;font-size:17.40px;line-height:20px;height:20px;color:#262e30;letter-spacing:0.931px;">клиновидного шва</div>
<div class="b" style="left:299.00px;top:1254.30px;width:143.80px;height:28.40px;background:#fff;border:1.3px solid #d2d2d2;"></div>
<svg class="b" style="left:303.00px;top:1257.80px;" width="14" height="22" viewBox="0 0 14 22"><path d="M1.6,7 L6.6,1.6 L11.6,7 M1.6,14.6 L6.6,20 L11.6,14.6" fill="none" stroke="#9a9a9a" stroke-width="1.2" stroke-linecap="round" stroke-linejoin="round"/></svg>
<div class="t" style="left:325.70px;top:1258px;font-size:17.60px;line-height:20px;height:20px;color:#262e30;letter-spacing:-0.835px;">155</div>
<svg class="b" style="left:432.00px;top:1259.90px;" width="7" height="7" viewBox="0 0 7 7"><circle cx="3.2" cy="3.2" r="2" fill="none" stroke="#7a7a7a" stroke-width="0.9"/></svg>
<div class="t" style="left:35.50px;top:1304px;font-size:17.40px;line-height:20px;height:20px;color:#262e30;letter-spacing:0.844px;">Клиновидный шов вдоль</div>
<div class="t" style="left:35.50px;top:1325px;font-size:17.40px;line-height:20px;height:20px;color:#262e30;letter-spacing:0.871px;">всего периметра</div>
<div class="b" style="left:300.20px;top:1314.60px;width:20.50px;height:20.20px;background:#fff;border:1.5px solid #bdbdbd;border-radius:3.5px;"></div>
<div class="t" style="left:35.50px;top:1360px;font-size:17.40px;line-height:20px;height:20px;color:#262e30;letter-spacing:0.981px;">Шагов клиновидного шва</div>
<div class="b" style="left:299.00px;top:1356.20px;width:143.80px;height:28.40px;background:#fff;border:1.3px solid #d2d2d2;"></div>
<svg class="b" style="left:303.00px;top:1359.70px;" width="14" height="22" viewBox="0 0 14 22"><path d="M1.6,7 L6.6,1.6 L11.6,7 M1.6,14.6 L6.6,20 L11.6,14.6" fill="none" stroke="#9a9a9a" stroke-width="1.2" stroke-linecap="round" stroke-linejoin="round"/></svg>
<div class="t" style="left:325.70px;top:1360px;font-size:17.60px;line-height:20px;height:20px;color:#262e30;letter-spacing:-1.880px;">10</div>
<svg class="b" style="left:0;top:0" width="2560" height="1388" viewBox="0 0 2560 1388"><defs><clipPath id="vpc"><rect x="511" y="84" width="2049" height="1304"/></clipPath><linearGradient id="gTube" gradientUnits="userSpaceOnUse" x1="1120" y1="800" x2="1215" y2="700"><stop offset="0" stop-color="#1a1a1a"/><stop offset="0.45" stop-color="#282828"/><stop offset="0.75" stop-color="#393939"/><stop offset="1" stop-color="#2b2b2b"/></linearGradient><linearGradient id="gCol" gradientUnits="userSpaceOnUse" x1="1160" y1="850" x2="1260" y2="750"><stop offset="0" stop-color="#1c1c1c"/><stop offset="0.5" stop-color="#262626"/><stop offset="1" stop-color="#303030"/></linearGradient><linearGradient id="gIn" gradientUnits="userSpaceOnUse" x1="1230" y1="850" x2="1300" y2="780"><stop offset="0" stop-color="#262626"/><stop offset="0.55" stop-color="#3b3b3b"/><stop offset="1" stop-color="#2c2c2c"/></linearGradient><linearGradient id="gEdge" gradientUnits="userSpaceOnUse" x1="1380" y1="760" x2="1420" y2="790"><stop offset="0" stop-color="#2e2e2e"/><stop offset="1" stop-color="#262626"/></linearGradient></defs>
<g clip-path="url(#vpc)">
<polygon points="1099.0,218.8 1104.1,216.9 1110.2,215.5 1117.1,214.7 1124.2,214.6 1131.0,215.2 1137.2,216.5 1476.0,311.1 1490.2,314.4 1505.4,315.3 1586.0,304.3 1601.8,306.8 1851.3,375.9 1861.0,381.9 1865.3,389.1 1884.6,415.7 1890.4,424.0 1904.6,430.7 2412.0,572.3 2427.3,575.8 2443.4,576.9 2531.9,566.7 2548.8,569.3 2830.2,647.3 2841.4,653.9 2847.0,661.7 2842.5,682.6 2849.9,691.7 2865.7,698.9 3275.0,813.1 3281.2,815.3 3286.0,818.1 3289.1,821.2 3290.1,824.4 3289.1,827.6 3286.1,830.4 1732.0,1869.0 1725.9,1872.1 1718.3,1874.4 1709.6,1875.6 1700.6,1875.7 1691.8,1874.7 1683.9,1872.6 -586.9,1085.0 -592.0,1082.6 -595.3,1079.6 -596.6,1076.3 -595.8,1072.8 -592.9,1069.4 -588.1,1066.4" fill="#262827"/>
<polygon points="1098.2,210.8 1103.3,208.9 1109.4,207.5 1116.3,206.7 1123.4,206.6 1130.2,207.2 1136.4,208.5 1475.2,303.1 1489.4,306.4 1504.6,307.3 1585.2,296.3 1601.0,298.8 1850.5,367.9 1860.2,373.9 1864.5,381.1 1883.8,407.7 1889.6,416.0 1903.8,422.7 2411.2,564.3 2426.5,567.8 2442.6,568.9 2531.1,558.7 2548.0,561.3 2829.4,639.3 2840.6,645.9 2846.2,653.7 2841.7,674.6 2849.1,683.7 2864.9,690.9 3274.2,805.1 3280.4,807.3 3285.2,810.1 3288.3,813.2 3289.3,816.4 3288.3,819.6 3285.3,822.4 1731.2,1861.0 1725.1,1864.1 1717.5,1866.4 1708.8,1867.6 1699.8,1867.7 1691.0,1866.7 1683.1,1864.6 -587.7,1077.0 -592.8,1074.6 -596.1,1071.6 -597.4,1068.3 -596.6,1064.8 -593.7,1061.4 -588.9,1058.4" fill="#3a3c3b"/>
<line x1="1230.3" y1="242.5" x2="-457.6" y2="1103.8" stroke="#858a87" stroke-width="1.2"/>
<line x1="1340.0" y1="273.2" x2="-342.5" y2="1143.6" stroke="#858a87" stroke-width="1.2"/>
<line x1="1450.8" y1="304.2" x2="-226.0" y2="1183.9" stroke="#858a87" stroke-width="1.2"/>
<line x1="1562.8" y1="335.4" x2="-108.2" y2="1224.7" stroke="#858a87" stroke-width="1.2"/>
<line x1="1676.0" y1="367.1" x2="10.9" y2="1265.9" stroke="#8f9491" stroke-width="2.2"/>
<line x1="1790.3" y1="399.0" x2="131.5" y2="1307.6" stroke="#858a87" stroke-width="1.2"/>
<line x1="1905.8" y1="431.3" x2="253.5" y2="1349.8" stroke="#858a87" stroke-width="1.2"/>
<line x1="2022.5" y1="463.9" x2="377.0" y2="1392.5" stroke="#858a87" stroke-width="1.2"/>
<line x1="2140.4" y1="496.8" x2="501.9" y2="1435.7" stroke="#858a87" stroke-width="1.2"/>
<line x1="2259.5" y1="530.1" x2="628.3" y2="1479.5" stroke="#8f9491" stroke-width="2.2"/>
<line x1="2379.9" y1="563.8" x2="756.3" y2="1523.8" stroke="#858a87" stroke-width="1.2"/>
<line x1="2501.6" y1="597.8" x2="885.9" y2="1568.6" stroke="#858a87" stroke-width="1.2"/>
<line x1="2624.6" y1="632.1" x2="1017.0" y2="1613.9" stroke="#858a87" stroke-width="1.2"/>
<line x1="2749.0" y1="666.9" x2="1149.7" y2="1659.8" stroke="#858a87" stroke-width="1.2"/>
<line x1="2874.6" y1="702.0" x2="1284.1" y2="1706.3" stroke="#8f9491" stroke-width="2.2"/>
<line x1="3001.7" y1="737.5" x2="1420.2" y2="1753.4" stroke="#858a87" stroke-width="1.2"/>
<line x1="3130.1" y1="773.4" x2="1557.9" y2="1801.1" stroke="#858a87" stroke-width="1.2"/>
<line x1="1038.2" y1="254.1" x2="3184.0" y2="860.2" stroke="#858a87" stroke-width="1.2"/>
<line x1="953.8" y1="296.7" x2="3106.9" y2="911.5" stroke="#858a87" stroke-width="1.2"/>
<line x1="868.1" y1="339.8" x2="3028.7" y2="963.5" stroke="#8f9491" stroke-width="2.2"/>
<line x1="781.3" y1="383.5" x2="2949.3" y2="1016.4" stroke="#858a87" stroke-width="1.2"/>
<line x1="693.3" y1="427.8" x2="2868.7" y2="1070.0" stroke="#858a87" stroke-width="1.2"/>
<line x1="604.1" y1="472.7" x2="2786.8" y2="1124.5" stroke="#858a87" stroke-width="1.2"/>
<line x1="513.7" y1="518.2" x2="2703.7" y2="1179.8" stroke="#858a87" stroke-width="1.2"/>
<line x1="421.9" y1="564.4" x2="2619.3" y2="1235.9" stroke="#8f9491" stroke-width="2.2"/>
<line x1="328.9" y1="611.2" x2="2533.6" y2="1292.9" stroke="#858a87" stroke-width="1.2"/>
<line x1="234.6" y1="658.7" x2="2446.6" y2="1350.9" stroke="#858a87" stroke-width="1.2"/>
<line x1="138.9" y1="706.9" x2="2358.1" y2="1409.7" stroke="#858a87" stroke-width="1.2"/>
<line x1="41.8" y1="755.7" x2="2268.3" y2="1469.5" stroke="#858a87" stroke-width="1.2"/>
<line x1="-56.7" y1="805.3" x2="2177.0" y2="1530.3" stroke="#8f9491" stroke-width="2.2"/>
<line x1="-156.6" y1="855.6" x2="2084.2" y2="1592.0" stroke="#858a87" stroke-width="1.2"/>
<line x1="-258.0" y1="906.7" x2="1989.9" y2="1654.8" stroke="#858a87" stroke-width="1.2"/>
<line x1="-360.9" y1="958.5" x2="1894.0" y2="1718.5" stroke="#858a87" stroke-width="1.2"/>
<line x1="-465.4" y1="1011.1" x2="1796.6" y2="1783.4" stroke="#858a87" stroke-width="1.2"/>
<polygon points="1080.1,233.1 1087.2,230.0 1095.6,227.3 1104.9,225.2 1114.9,223.7 1125.3,222.7 1136.0,222.4 1146.7,222.7 1157.0,223.6 1166.8,225.2 1175.8,227.3 3194.8,791.4 3204.5,794.6 3213.1,798.3 3220.2,802.4 3225.8,806.9 3229.8,811.6 3231.9,816.5 3232.2,821.4 3230.6,826.1 3227.2,830.6 3222.1,834.8 1747.2,1816.2 1738.6,1821.1 1728.5,1825.3 1717.0,1828.6 1704.6,1831.0 1691.6,1832.5 1678.1,1833.0 1664.7,1832.5 1651.5,1831.0 1639.0,1828.5 1627.5,1825.1 -514.6,1084.1 -522.9,1080.7 -529.6,1076.7 -534.6,1072.2 -537.8,1067.4 -539.2,1062.3 -538.6,1057.1 -536.1,1051.9 -531.8,1046.9 -525.8,1042.1 -518.2,1037.7" fill="none" stroke="#8a8f8c" stroke-width="1.7"/>
</g></svg>
<div class="b" style="left:0;top:0;width:2560px;height:1388px;overflow:hidden;clip-path:inset(84px 0 0 511px);"><svg class="b" style="left:0;top:0;transform-origin:0 0;transform:matrix3d(-0.91657876,0.40903220,0,-0.0000674369, -1.04075477,-0.29593681,0,0.0000507967, 0,0,1,0, 1226.32425,307.25484,0,1)" width="1100" height="80" viewBox="0 0 1100 80"><g transform="translate(0,60)" fill="none" stroke="#b3b3b3" stroke-width="7.5" stroke-linejoin="round"><path transform="translate(0.00,0)" d="M3.75,-3.75 V-40.25 H28.75 Q33.25,-40.25 33.25,-35.75 V-26 Q33.25,-22 28.75,-22 H3.75 M30.75,-22 Q35.25,-22 35.25,-17.5 V-8.25 Q35.25,-3.75 30.75,-3.75 H3.75"/><path transform="translate(44.25,0)" d="M4.75,-32.25 H24.75 Q29.25,-32.25 29.25,-27.75 V-3.75 M29.25,-19 H8.25 Q3.75,-19 3.75,-15 V-7.75 Q3.75,-3.75 8.25,-3.75 H29.25"/><path transform="translate(82.50,0)" d="M3.75,0 V-32.25 H42.75 Q47.25,-32.25 47.25,-27.75 V0 M25.5,-32.25 V0"/><path transform="translate(138.75,0)" d="M3.75,-44 V-3.75 H24.75 Q29.25,-3.75 29.25,-8.25 V-27.75 Q29.25,-32.25 24.75,-32.25 H3.75"/><path transform="translate(177.00,0)" d="M3.75,-36 V-8.25 Q3.75,-3.75 8.25,-3.75 H31.25 M31.25,-36 V0"/><path transform="translate(236.00,0)" d="M0,-40.25 H35 M17.5,-40.25 V0"/><path transform="translate(275.20,0)" d="M3.75,-17.5 H29.25 V-27.75 Q29.25,-32.25 24.75,-32.25 H8.25 Q3.75,-32.25 3.75,-27.75 V-8.25 Q3.75,-3.75 8.25,-3.75 H32"/><path transform="translate(312.40,0)" d="M2.5,-35.25 L29.5,0 M29.5,-35.25 L2.5,0"/><path transform="translate(348.60,0)" d="M9,-39.25 V-8.25 Q9,-3.75 13.5,-3.75 H26 M0,-32.25 H24"/><path transform="translate(378.80,0)" d="M3.75,-36 V-8.25 Q3.75,-3.75 8.25,-3.75 H31.25 M31.25,-36 V0"/><path transform="translate(418.00,0)" d="M3.75,0 V-27.75 Q3.75,-32.25 8.25,-32.25 H24"/><path transform="translate(446.20,0)" d="M3.75,-17.5 H29.25 V-27.75 Q29.25,-32.25 24.75,-32.25 H8.25 Q3.75,-32.25 3.75,-27.75 V-8.25 Q3.75,-3.75 8.25,-3.75 H32"/><path transform="translate(483.40,0)" d="M29.25,-44 V-3.75 H8.25 Q3.75,-3.75 3.75,-8.25 V-27.75 Q3.75,-32.25 8.25,-32.25 H29.25"/><path transform="translate(541.00,0)" d="M3.75,0 V-40.25 H27.75 Q32.25,-40.25 32.25,-35.75 V-19 Q32.25,-14.5 27.75,-14.5 H3.75"/><path transform="translate(585.50,0)" d="M33,-40.25 H3.75 V-3.75 H33 M3.75,-22 H30"/><path transform="translate(627.00,0)" d="M3.75,-44 V0"/><path transform="translate(657.00,0)" d="M3.75,0 V-40.25 H27.75 Q32.25,-40.25 32.25,-35.75 V-19 Q32.25,-14.5 27.75,-14.5 H3.75"/><path transform="translate(698.00,0)" d="M3.75,-44 V-8.25 Q3.75,-3.75 8.25,-3.75 H13"/><path transform="translate(716.00,0)" d="M4.75,-32.25 H24.75 Q29.25,-32.25 29.25,-27.75 V-3.75 M29.25,-19 H8.25 Q3.75,-19 3.75,-15 V-7.75 Q3.75,-3.75 8.25,-3.75 H29.25"/><path transform="translate(754.00,0)" d="M9,-39.25 V-8.25 Q9,-3.75 13.5,-3.75 H26 M0,-32.25 H24"/><path transform="translate(785.00,0)" d="M3.75,-17.5 H29.25 V-27.75 Q29.25,-32.25 24.75,-32.25 H8.25 Q3.75,-32.25 3.75,-27.75 V-8.25 Q3.75,-3.75 8.25,-3.75 H32"/></g></svg></div>
<svg class="b" style="left:0;top:0" width="2560" height="1388" viewBox="0 0 2560 1388"><g clip-path="url(#vpc)">
<path d="M1281.4,179.7 L1374.2,203.8" fill="none" stroke="#00b140" stroke-width="5.2" stroke-linecap="round"/>
<path d="M1296.7,173.1 L1314.8,164.9 L1401.6,160.3 Q1424.8,159.9 1423.9,167.7 Q1422.2,173.9 1405.9,175.0 L1319.9,179.7 Z M1316.1,172.2 L1321.6,169.4 L1402.4,165.2 Q1411.0,165.1 1410.6,167.7 Q1409.7,170.1 1402.4,170.3 L1323.4,174.2 Z" fill="#00b140" fill-rule="evenodd"/>
<path d="M2570,1315 L2478,1369.5 Q2465,1377.5 2480,1383.5 L2506,1392.5" fill="none" stroke="#565656" stroke-width="9"/>
<rect x="2556.5" y="1343" width="6" height="42" fill="#4a4a4a"/>
<path d="M1405.3,798.6 L1396.6,789.5 L1426.7,771.3 Q1456.8,753.0 1467.5,745.9 L1478.2,738.8 L1482.2,742.7 Q1486.1,746.7 1487.5,750.3 Q1488.8,753.8 1483.9,762.1 Q1479.0,770.5 1475.0,777.6 Q1471.1,784.7 1457.6,792.7 Q1444.1,800.6 1431.4,806.9 Q1418.8,813.3 1416.4,810.5 L1414.0,807.7 L1405.3,798.6 Z" fill="#252525" />
<path d="M1462.4,756.2 L1456.8,753.0 L1467.5,745.9 L1478.2,738.8 L1482.2,742.7 L1486.1,746.7 L1477.0,753.0 L1467.9,759.4 L1462.4,756.2 Z" fill="#313131" />
<path d="M1334.8,823.2 L1330.0,820.4 L1341.1,804.9 Q1352.2,789.5 1379.1,753.0 Q1406.1,716.6 1417.2,706.3 Q1428.3,696.0 1441.0,686.1 Q1453.6,676.2 1460.8,672.4 Q1467.9,668.7 1473.0,670.1 Q1478.2,671.4 1484.3,677.2 Q1490.4,683.0 1492.0,687.2 Q1493.6,691.5 1491.8,696.9 Q1490.1,702.3 1485.3,715.8 Q1480.6,729.3 1479.4,734.0 L1478.2,738.8 L1467.5,745.9 Q1456.8,753.0 1437.8,768.1 Q1418.8,783.1 1409.3,786.7 Q1399.7,790.3 1395.0,789.1 L1390.2,787.9 L1379.1,794.2 L1368.0,800.6 L1353.8,813.3 L1339.5,825.9 L1334.8,823.2 Z" fill="#2a2a2a" />
<path d="M1411.6,723.7 L1404.5,718.2 L1416.4,707.1 L1428.3,696.0 L1434.6,702.3 L1441.0,708.6 L1429.9,718.9 L1418.8,729.3 L1411.6,723.7 Z" fill="#353535" opacity="0.8"/>
<path d="M1380.7,792.7 L1371.2,797.4 L1399.7,761.0 Q1428.3,724.5 1442.5,711.0 Q1456.8,697.6 1469.5,690.6 Q1482.2,683.6 1487.6,685.7 Q1492.9,687.7 1491.5,695.0 Q1490.1,702.3 1485.3,715.8 Q1480.6,729.3 1479.4,734.0 L1478.2,738.8 L1467.5,745.9 Q1456.8,753.0 1437.8,768.1 Q1418.8,783.1 1409.3,786.7 Q1399.7,790.3 1395.0,789.1 L1390.2,787.9 L1380.7,792.7 Z" fill="#151515" />
<ellipse cx="1444.4" cy="734.0" rx="25.5" ry="10" transform="rotate(-43.5 1444.4 734.0)" fill="#363636"/>
<ellipse cx="1441.0" cy="738.8" rx="19" ry="6" transform="rotate(-43.5 1441.0 738.8)" fill="#2a2a2a"/>
<polygon points="1460.0,853.9 1545.6,879.3 1529.7,899.9 1498.0,885.6 1441.0,839.6" fill="#272727" />
<polygon points="1498.0,885.6 1529.7,899.9 1520.2,911.0" fill="#1b1b1b" />
<path d="M1488.5,960.9 L1504.4,931.6 L1534.5,895.1 Q1564.6,858.6 1570.9,851.5 Q1577.3,844.4 1583.6,838.0 Q1589.9,831.7 1599.5,825.4 Q1609.0,819.0 1616.1,816.2 Q1623.2,813.3 1627.6,815.4 Q1631.9,817.4 1636.9,823.0 Q1641.9,828.5 1641.5,834.9 Q1641.0,841.2 1636.1,855.5 Q1631.2,869.7 1625.6,880.8 Q1620.1,891.9 1609.8,908.6 Q1599.5,925.2 1595.5,931.6 Q1591.5,937.9 1578.1,944.2 Q1564.6,950.6 1560.6,953.7 Q1556.7,956.9 1548.7,958.2 Q1540.8,959.5 1530.5,966.9 Q1520.2,974.4 1512.3,979.9 Q1504.4,985.4 1491.7,993.4 Q1479.0,1001.3 1475.8,995.8 L1472.7,990.2 L1488.5,960.9 Z" fill="#272727" />
<path d="M1568.9,867.0 L1563.0,860.2 L1570.1,852.3 L1577.3,844.4 L1583.6,850.7 L1589.9,857.1 L1582.4,865.4 L1574.9,873.7 L1568.9,867.0 Z" fill="#343434" opacity="0.8"/>
<path d="M1507.5,958.5 L1520.2,942.7 L1548.7,904.6 Q1577.3,866.6 1589.9,853.1 Q1602.6,839.6 1616.9,830.3 Q1631.2,820.9 1636.4,826.3 Q1641.6,831.7 1641.3,836.5 Q1641.0,841.2 1636.1,855.5 Q1631.2,869.7 1625.6,880.8 Q1620.1,891.9 1609.8,908.6 Q1599.5,925.2 1595.5,931.6 Q1591.5,937.9 1578.1,944.2 Q1564.6,950.6 1542.4,962.5 Q1520.2,974.4 1512.3,979.9 Q1504.4,985.4 1499.6,979.9 L1494.8,974.4 L1507.5,958.5 Z" fill="#151515" />
<path d="M1544.8,955.8 Q1540.8,959.5 1548.7,958.2 Q1556.7,956.9 1560.6,953.7 Q1564.6,950.6 1563.8,947.8 Q1563.0,945.0 1555.9,948.6 Q1548.7,952.2 1544.8,955.8 Z" fill="#2b2b2b" />
<ellipse cx="1596.3" cy="877.7" rx="26" ry="10" transform="rotate(-45 1596.3 877.7)" fill="#353535"/>
<ellipse cx="1592.8" cy="882.7" rx="19" ry="6" transform="rotate(-45 1592.8 882.7)" fill="#292929"/>
<path d="M1157.8,693.8 L1173.2,678.3 L1195.0,699.3 L1216.8,720.3 L1224.7,730.6 L1232.7,741.0 L1194.6,784.5 L1156.6,828.1 L1153.4,822.2 L1150.2,816.2 L1130.4,798.4 Q1110.6,780.6 1108.2,775.4 Q1105.9,770.3 1112.2,757.2 Q1118.5,744.1 1130.4,726.7 Q1142.3,709.3 1157.8,693.8 Z" fill="url(#gTube)" />
<polygon points="1216.8,720.3 1299.2,714.0 1345.2,794.8 1330.9,820.2 1248.5,772.7" fill="#242424" />
<path d="M1217.6,722.7 L1202.5,704.5 L1207.7,695.0 Q1212.8,685.5 1214.0,676.8 Q1215.2,668.0 1220.0,659.3 L1224.7,650.6 L1227.3,651.4 L1229.8,652.2 L1250.2,672.0 Q1270.7,691.8 1277.0,692.2 Q1283.4,692.6 1290.7,698.6 Q1298.0,704.5 1298.6,709.3 L1299.2,714.0 L1288.1,735.4 L1277.0,756.8 L1254.8,748.9 L1232.7,741.0 L1217.6,722.7 Z" fill="#222222" />
<polygon points="1215.2,668.0 1224.7,650.6 1229.8,652.2 1270.7,691.8 1283.4,692.6 1298.0,704.5 1277.0,726.7" fill="#1f1f1f" />
<polygon points="1298.0,704.5 1299.2,714.0 1264.4,766.3 1260.4,763.1 1277.0,726.7" fill="#131313" />
<path d="M1280.2,740.2 L1299.2,714.0 L1304.0,715.2 Q1308.7,716.4 1313.5,720.7 Q1318.2,725.1 1320.3,730.6 Q1322.4,736.2 1322.0,750.5 Q1321.7,764.7 1324.7,770.3 Q1327.8,775.8 1336.5,785.3 L1345.2,794.8 L1338.1,807.5 L1330.9,820.2 L1296.1,793.3 L1261.2,766.3 L1280.2,740.2 Z" fill="#242424" />
<path d="M1287.7,743.2 L1303.2,716.9 L1306.0,716.6 Q1308.7,716.4 1313.5,720.7 Q1318.2,725.1 1320.3,730.6 Q1322.4,736.2 1322.0,750.5 Q1321.7,764.7 1308.9,760.8 Q1296.1,756.8 1294.9,769.5 Q1293.7,782.2 1283.0,775.8 L1272.3,769.5 L1287.7,743.2 Z" fill="#272727" />
<path d="M1311.3,761.6 Q1321.7,764.7 1324.7,770.3 Q1327.8,775.8 1336.5,785.3 L1345.2,794.8 L1338.1,805.9 L1330.9,817.0 L1315.1,802.8 Q1299.2,788.5 1296.8,779.0 Q1294.5,769.5 1297.6,763.9 Q1300.8,758.4 1311.3,761.6 Z" fill="#2b2b2b" />
<path d="M1204.1,727.5 L1216.8,720.3 L1222.4,719.6 L1227.9,718.8 L1232.7,724.3 L1237.4,729.9 L1249.3,748.1 L1261.2,766.3 L1296.1,793.3 L1330.9,820.2 L1336.5,813.9 L1342.0,807.5 L1347.9,808.0 L1353.8,808.5 L1360.9,804.5 L1368.0,800.6 L1379.1,794.2 L1390.2,787.9 L1402.9,798.2 L1415.6,808.5 L1437.8,830.7 L1460.0,852.9 L1479.0,869.2 L1498.0,885.6 L1509.1,898.3 L1520.2,911.0 L1512.3,921.3 L1504.4,931.6 L1512.3,937.1 L1520.2,942.7 L1507.5,958.5 L1494.8,974.4 L1499.6,979.9 L1504.4,985.4 L1491.7,993.4 Q1479.0,1001.3 1472.7,1003.4 Q1466.3,1005.4 1460.0,1004.5 Q1453.6,1003.7 1436.8,998.0 Q1420.0,992.4 1372.5,978.5 Q1325.1,964.7 1307.6,957.9 Q1290.2,951.2 1279.1,944.1 Q1268.0,936.9 1252.2,921.9 Q1236.3,906.8 1225.2,896.5 Q1214.1,886.2 1204.6,877.5 Q1195.1,868.8 1187.2,864.0 Q1179.3,859.3 1168.2,848.9 Q1157.1,838.6 1153.3,833.1 Q1149.5,827.6 1149.5,820.8 Q1149.5,814.1 1152.1,806.5 Q1154.7,799.0 1162.2,791.1 Q1169.7,783.2 1172.7,766.8 Q1175.6,750.5 1183.5,742.5 Q1191.4,734.6 1204.1,727.5 Z" fill="#212121" />
<path d="M1204.1,727.5 L1216.8,720.3 L1222.4,719.6 L1227.9,718.8 L1232.7,724.3 L1237.4,729.9 L1243.7,743.3 L1250.1,756.8 L1232.7,773.4 L1215.2,790.1 L1205.2,829.4 L1195.1,868.8 L1187.2,864.0 Q1179.3,859.3 1168.2,848.9 Q1157.1,838.6 1153.3,833.1 Q1149.5,827.6 1149.5,820.8 Q1149.5,814.1 1152.1,806.5 Q1154.7,799.0 1162.2,791.1 Q1169.7,783.2 1172.7,766.8 Q1175.6,750.5 1183.5,742.5 Q1191.4,734.6 1204.1,727.5 Z" fill="url(#gCol)" />
<path d="M1204.1,763.1 L1216.8,769.5 L1231.5,760.0 L1246.1,750.5 L1252.1,756.0 L1258.0,761.6 L1277.3,770.8 Q1296.5,780.0 1313.2,800.2 Q1329.8,820.4 1325.9,826.4 Q1321.9,832.3 1314.0,844.2 Q1306.1,856.1 1295.0,860.8 Q1283.9,865.6 1277.5,862.4 Q1271.2,859.3 1237.1,831.5 Q1203.0,803.8 1197.2,780.3 L1191.4,756.8 L1204.1,763.1 Z" fill="url(#gIn)" />
<polygon points="1208.9,758.1 1237.1,732.2 1233.4,741.7 1216.0,764.7" fill="#141414" />
<polygon points="1216.0,764.7 1233.4,741.7 1246.1,749.7 1232.7,756.8 1221.6,770.3" fill="#2c2c2c" />
<polygon points="1368.0,800.6 1390.2,787.9 1415.6,808.5 1460.0,852.9 1498.0,885.6 1520.2,911.0 1504.4,931.6" fill="#2b2b2b" />
<path d="M1368.8,800.9 L1504.4,931.6" stroke="#3b3b3b" stroke-width="1.6" fill="none"/>
<polygon points="1504.4,931.6 1520.2,911.0 1529.7,899.9 1545.6,879.3 1564.6,858.6 1574.9,873.7 1520.2,942.7" fill="#242424" />
</g></svg>
<div class="b" style="left:511.00px;top:84.00px;width:20.00px;height:19.50px;background:#fafafa;"></div>
<svg class="b" style="left:514.00px;top:89.00px;" width="14" height="10" viewBox="0 0 14 10"><path d="M4.2,1.8 L1.2,5 L4.2,8.2 M9.8,1.8 L12.8,5 L9.8,8.2" fill="none" stroke="#3b4446" stroke-width="1.3"/><path d="M7,-0.6 V9.8" stroke="#8d9293" stroke-width="1.5"/></svg>
<div class="b" style="left:952.00px;top:84.00px;width:1206.50px;height:57.50px;background:#fafafa;"></div>
<div class="b" style="left:952.00px;top:84.00px;width:1.20px;height:57.50px;background:#f0f0f0;"></div>
<svg class="b" style="left:0;top:0" width="2560" height="150" viewBox="0 0 2560 150"><defs><pattern id="hat" width="2.4" height="2.4" patternUnits="userSpaceOnUse" patternTransform="rotate(-45)"><rect width="2.4" height="2.4" fill="#fafafa"/><rect width="2.4" height="0.9" fill="#d4d4d4"/></pattern></defs><g fill="none" stroke="#3b4446" stroke-width="1.5" stroke-linejoin="round"><path d="M958.86,104.98 L983.64,104.98 L983.64,129.24 L958.86,129.24 Z"/><path d="M958.86,104.98 L970.98,92.54 L995.77,92.54 L983.64,104.98 Z"/><path d="M995.77,92.54 L995.77,112.16"/><path d="M983.64,129.24 L987.44,125.23"/><circle cx="995.24" cy="120.59" r="8.5" fill="#fafafa" stroke-width="1.3"/><path d="M989.44,120.59 h11.6 M995.24,114.79 v11.6" stroke-width="1.3"/><path d="M1013.38,93.91 H1047.77 V128.50 H1013.38 Z M1020.62,93.91 V128.50 M1027.86,93.91 V128.50 M1035.10,93.91 V128.50 M1042.34,93.91 V128.50 M1013.38,101.19 H1047.77 M1013.38,108.48 H1047.77 M1013.38,115.76 H1047.77 M1013.38,123.04 H1047.77" stroke-width="1.4"/><circle cx="1044.81" cy="122.91" r="8.5" fill="#fafafa" stroke-width="1.3"/><path d="M1039.01,122.91 h11.6 M1044.81,117.11 v11.6" stroke-width="1.3"/><path d="M1084.36,94.23 L1106.51,99.92 L1100.18,122.18 L1078.56,116.06 Z" stroke-width="1.3"/><path d="M1066.43,114.69 L1075.93,117.32 L1068.54,124.18 Z" stroke-width="1.2"/><path d="M1076.98,110.47 Q1071.71,112.37 1071.18,117.43" stroke-width="1.2"/><rect x="1069.60" y="127.34" width="35.33" height="4.22" rx="2.1" stroke-width="1.3"/><rect x="1118.43" y="93.91" width="37.34" height="37.65" rx="0.8" stroke-width="1.5"/><rect x="1122.86" y="97.39" width="29.53" height="10.76" rx="1.2" stroke-width="1.4"/><rect x="1122.86" y="111.31" width="8.75" height="16.03" rx="1.2" stroke-width="1.4"/><rect x="1134.46" y="111.63" width="17.93" height="6.01" rx="1.2" stroke-width="1.4"/><rect x="1134.46" y="120.59" width="17.93" height="6.75" rx="1.2" stroke-width="1.4"/></g><text x="1064.64" y="105.62" font-family="Liberation Sans, sans-serif" font-size="5.4" font-weight="700" font-style="italic" fill="#3b4446" textLength="15.6" lengthAdjust="spacingAndGlyphs">AUTO</text><g fill="none" stroke="#cfcfcf" stroke-width="1.3" stroke-linejoin="round"><rect x="1173.27" y="98.13" width="32.38" height="1.58" fill="#c4c4c4" stroke="none"/><rect x="1173.27" y="102.35" width="32.38" height="3.16" rx="0.6" stroke-width="1.2"/><rect x="1173.27" y="108.36" width="32.38" height="3.48" rx="0.6" stroke-width="1.2"/><rect x="1173.27" y="115.53" width="32.38" height="4.22" rx="0.6" stroke-width="1.2"/><rect x="1173.27" y="122.91" width="32.38" height="5.80" rx="0.6" stroke-width="1.2"/><path d="M1269.41,92.64 L1276.45,99.28 L1271.80,99.28 L1271.80,104.33 L1267.02,104.33 L1267.02,99.28 L1262.38,99.28 Z" /><path d="M1269.41,133.15 L1276.45,126.51 L1271.80,126.51 L1271.80,121.59 L1267.02,121.59 L1267.02,126.51 L1262.38,126.51 Z" /><path d="M1249.23,112.96 L1256.27,106.19 L1256.27,110.70 L1261.45,110.70 L1261.45,115.22 L1256.27,115.22 L1256.27,119.73 Z" /><path d="M1290.00,112.96 L1282.96,106.19 L1282.96,110.70 L1277.52,110.70 L1277.52,115.22 L1282.96,115.22 L1282.96,119.73 Z" /><rect x="1267.16" y="110.70" width="4.52" height="4.52" rx="1" stroke-width="1.3"/><path d="M1320.95,104.59 L1335.29,118.54 L1320.95,132.75 L1306.73,118.54 Z" /><path d="M1328.91,105.92 L1337.55,96.63 L1340.60,108.58 Z" /><path d="M1303.28,119.47 A16.6,16.6 0 0 1 1331.17,100.88" stroke-width="1.1"/><rect x="1354.41" y="94.23" width="37.32" height="37.19" stroke-dasharray="2.2 2.6" stroke-width="1.2"/><rect x="1354.41" y="110.57" width="20.60" height="20.80" fill="#fafafa"/><path d="M1376.73,107.91 L1382.04,102.60 L1379.38,99.95 L1386.69,99.28 L1386.29,106.98 L1383.77,104.33 L1378.45,109.64 Z" /><path d="M1423.88,95.03 L1445.79,99.28 L1440.48,121.59 L1419.23,116.81 Z" /><path d="M1406.34,114.95 L1415.91,117.61 L1409.00,124.52 Z" /><path d="M1416.97,110.17 Q1411.92,111.90 1411.26,116.81" stroke-width="1.1"/><rect x="1409.27" y="127.44" width="35.59" height="4.12" rx="2"/><rect x="1460.40" y="94.23" width="34.13" height="15.94" rx="0.6" stroke-width="1.4"/><rect x="1460.40" y="115.22" width="34.13" height="15.94" rx="0.6" stroke-width="1.4"/><path d="M1460.40,112.56 H1494.53" stroke-dasharray="1.6 1.4" stroke-width="1"/><rect x="1522.42" y="94.23" width="26.56" height="27.36" rx="0.4" stroke-width="1.4"/><rect x="1509.54" y="104.59" width="26.96" height="27.23" rx="0.4" stroke-width="1.4"/><rect x="1522.42" y="104.59" width="14.08" height="17.00" fill="url(#hat)" stroke-width="1.2"/><rect x="1566.36" y="119.47" width="35.20" height="11.02" rx="0.4" stroke-width="1.3"/><rect x="1574.33" y="110.57" width="18.59" height="7.97" stroke-dasharray="1.2 1.2" stroke-width="1"/><path d="M1580.17,95.30 L1596.51,103.00 L1592.92,109.91 L1576.59,102.20 Z" /><path d="M1562.91,107.91 L1571.94,110.17 L1565.56,116.28 Z" /><path d="M1573.93,103.27 Q1569.28,104.33 1568.22,108.84" stroke-width="1.1"/><path d="M1612.71,113.89 L1631.44,95.03 L1647.64,111.23 L1628.78,130.49 Z" /><path d="M1615.10,111.23 H1647.64"/><path d="M1617.36,93.97 L1630.38,106.72" stroke="#c2c2c2" stroke-width="2.8"/><path d="M1648.30,116.28 q-5.6,8.4 -5.6,12.4 a5.6,5.6 0 0 0 11.2,0 q0,-4 -5.6,-12.4 Z"/><path d="M1718.70,94.23 L1755.22,94.23 L1755.22,131.16 L1738.62,131.16 L1738.62,110.17 L1718.70,110.17 Z" /><rect x="1720.69" y="110.17" width="12.88" height="20.98" fill="url(#hat)" stroke-width="1.2"/><path d="M1770.49,106.19 L1795.73,106.19 L1795.73,130.89 L1770.49,130.89 Z" /><path d="M1770.49,106.19 L1782.45,93.97 L1807.28,93.97 L1795.73,106.19 Z" /><path d="M1807.28,93.97 L1807.28,118.54 L1795.73,130.89" /><path d="M1776.47,109.24 L1780.45,109.91 L1785.77,129.83" stroke-dasharray="1 1.6" stroke-width="1"/><circle cx="1828.27" cy="100.61" r="5.6" fill="url(#hat)" stroke-width="1.1"/><circle cx="1852.84" cy="100.61" r="5.6" fill="url(#hat)" stroke-width="1.1"/><circle cx="1828.27" cy="125.58" r="5.6" fill="url(#hat)" stroke-width="1.1"/><circle cx="1852.84" cy="125.58" r="5.6" fill="url(#hat)" stroke-width="1.1"/><rect x="1828.27" y="101.67" width="24.17" height="23.11" fill="#fafafa"/><path d="M1874.61,105.92 L1899.84,105.92 L1899.84,131.42 L1874.61,131.42 Z" /><path d="M1874.61,105.92 L1887.23,93.57 L1912.06,93.57 L1899.84,105.92 Z" /><path d="M1912.06,93.57 L1912.06,118.94 L1899.84,131.42" /><path d="M1875.67,110.57 q1.5,-1.6 3,0 t3,0 t3,0 t3,0 t3,0 t3,0 t3,0 t3,0" stroke-width="0.9"/><path d="M1900.64,108.98 q1.2,-3 2.6,-2.8 t2.6,-2.8 t2.6,-2.8 t2.6,-2.8" stroke-width="0.9"/><path d="M1875.67,115.88 q1.5,-1.6 3,0 t3,0 t3,0 t3,0 t3,0 t3,0 t3,0 t3,0" stroke-width="0.9"/><path d="M1900.64,114.29 q1.2,-3 2.6,-2.8 t2.6,-2.8 t2.6,-2.8 t2.6,-2.8" stroke-width="0.9"/><path d="M1875.67,121.59 q1.5,-1.6 3,0 t3,0 t3,0 t3,0 t3,0 t3,0 t3,0 t3,0" stroke-width="0.9"/><path d="M1900.64,120.00 q1.2,-3 2.6,-2.8 t2.6,-2.8 t2.6,-2.8 t2.6,-2.8" stroke-width="0.9"/><path d="M1875.67,127.44 q1.5,-1.6 3,0 t3,0 t3,0 t3,0 t3,0 t3,0 t3,0 t3,0" stroke-width="0.9"/><path d="M1900.64,125.84 q1.2,-3 2.6,-2.8 t2.6,-2.8 t2.6,-2.8 t2.6,-2.8" stroke-width="0.9"/><path d="M1933.45,133.15 L1933.45,99.28 L1956.95,99.28 L1961.20,103.93 L1961.20,133.15 Z" fill="#fafafa"/><path d="M1933.45,125.84 L1926.41,125.84 L1926.41,92.91 L1950.31,92.91 L1954.56,98.22" /><path d="M1985.51,133.15 L1985.51,99.28 L2009.02,99.28 L2013.27,103.93 L2013.27,133.15 Z" fill="#fafafa"/><path d="M1985.51,125.84 L1978.47,125.84 L1978.47,92.91 L2002.38,92.91 L2006.63,98.22" /><rect x="1942.34" y="107.25" width="11.29" height="17.93" rx="5.4" stroke-width="1.2"/><path d="M1994.41,125.58 V108.58 h7 a4.6,4.6 0 0 1 0,9.2 h-7" stroke-width="1.2"/><path d="M2029.73,119.87 L2056.30,93.70 L2067.85,105.26 L2041.29,131.82 Z" /><path d="M2032.69,116.96 L2034.56,118.84" stroke-width="0.9"/><path d="M2035.64,114.05 L2036.86,115.27" stroke-width="0.9"/><path d="M2038.59,111.15 L2040.47,113.02" stroke-width="0.9"/><path d="M2041.54,108.24 L2042.76,109.46" stroke-width="0.9"/><path d="M2044.49,105.33 L2046.37,107.21" stroke-width="0.9"/><path d="M2047.44,102.42 L2048.66,103.65" stroke-width="0.9"/><path d="M2050.39,99.52 L2052.27,101.40" stroke-width="0.9"/><path d="M2053.35,96.61 L2054.57,97.83" stroke-width="0.9"/></g><g fill="none" stroke="#3b4446" stroke-width="1.5" stroke-linejoin="round"><path d="M1666.50,94.23 L1695.45,94.23 L1695.45,100.34 L1684.83,100.34 L1684.83,130.89 L1676.86,130.89 L1676.86,100.34 L1666.50,100.34 Z"/></g><text x="1689.34" y="130.89" font-family="Liberation Sans, sans-serif" font-size="22" fill="#fafafa" stroke="#3b4446" stroke-width="1.2" textLength="14.5" lengthAdjust="spacingAndGlyphs">a</text><path d="M1227.4,94.2 V131.8 M2086.5,94.2 V131.8" stroke="#3b4446" stroke-width="1.3"/><g fill="none" stroke="#2c3437" stroke-width="1.5" stroke-linejoin="round"><path d="M2124.30,101.27 L2109.42,101.27 L2109.42,131.55 L2139.97,131.55 L2139.97,116.55 L2133.59,116.55"/><path d="M2124.30,101.27 v4.2 q-4.4,1.4 -2.6,5.2 q2,2.8 2.6,5 M2124.30,131.55 v-6 q4,-2.8 1.2,-6.6 q-2.6,-2.2 -1.2,-4.4" /><path d="M2109.42,116.55 h4.6 q1.6,3.8 4.4,2.4 q2.2,-1.4 2.6,-2.4 h3.2"/><path d="M2124.30,116.55 h3 q1.6,-4.2 4.6,-2.4 q1.6,1 1.8,2.4"/><path d="M2136.91,91.58 L2147.54,102.20 L2136.91,112.56 L2132.53,108.31 L2133.59,105.92 L2130.94,104.33 L2128.95,105.92 L2126.69,102.60 L2129.61,99.28 L2128.02,96.63 L2130.94,94.63 L2133.33,95.56 Z"/></g></svg>
<svg class="b" style="left:0;top:0" width="2560" height="1388" viewBox="0 0 2560 1388"><polygon points="537.00,1275.00 582.50,1250.75 646.75,1270.00 611.25,1290.50" fill="#c9c9c9"/><polygon points="537.00,1275.00 611.25,1290.50 611.25,1363.00 535.00,1350.75" fill="#c3c3c3"/><polygon points="611.25,1290.50 646.75,1270.00 646.75,1342.00 611.25,1363.00" fill="#cbcbcb"/><polygon points="535.00,1350.75 611.25,1363.00 604.50,1369.00" fill="#c3c3c3"/><g stroke="#b3b3b3" stroke-width="0.6" fill="none"><path d="M611.2,1290.5 L611.2,1363.0 M635.8,1276.2 L635.8,1348.8"/><path d="M611.2,1308.0 L646.8,1287.5 M611.2,1343.8 L646.8,1323.2 M601.2,1350.0 L611.2,1343.8"/><path d="M561.2,1287.0 L606.2,1263.0 M585.0,1290.0 L632.5,1266.2 M571.2,1261.2 L635.0,1280.0" stroke-dasharray="1.6 1.4"/></g><path d="M535.0,1350.0 L585.0,1322.0" stroke="#b4d4b4" stroke-width="2.2"/><text x="592.0" y="1321.2" font-family="Liberation Sans, sans-serif" font-size="11" fill="#a9d3a9">y</text><path d="M535.0,1350.8 L535.0,1281.2" stroke="#7b7bd0" stroke-width="2.6"/><polygon points="535.00,1270.75 529.50,1283.00 540.75,1283.00" fill="#7b7bd0"/><text x="531.0" y="1260.5" font-family="Liberation Sans, sans-serif" font-size="10.5" fill="#8484d4">z</text><path d="M535.0,1350.8 L596.2,1369.2" stroke="#cf7a7a" stroke-width="2.6"/><polygon points="605.50,1370.50 595.00,1362.00 592.50,1373.00" fill="#cf7a7a"/><text x="615.0" y="1380.5" font-family="Liberation Sans, sans-serif" font-size="10.5" fill="#d47878">x</text><text transform="matrix(1,0.215,0,1,542.0,1321.5)" font-family="Liberation Sans, sans-serif" font-size="12.4" fill="#505050" textLength="51" lengthAdjust="spacingAndGlyphs">Спереди</text><text transform="matrix(0.8,-0.46,0,1,608.0,1332.0)" font-family="Liberation Sans, sans-serif" font-size="11.6" fill="#505050" textLength="39" lengthAdjust="spacingAndGlyphs">Справа</text><text transform="matrix(0.9,0.27,-0.5,0.27,568.0,1270.5)" font-family="Liberation Sans, sans-serif" font-size="12" fill="#4a4a4a" textLength="46" lengthAdjust="spacingAndGlyphs">Сверху</text><circle cx="701.5" cy="1349.5" r="21.8" fill="#d7d7d7"/><g transform="translate(701.5,1349.5)" fill="none" stroke="#6b6b6b" stroke-width="1.7" stroke-linecap="round" stroke-linejoin="round"><path d="M-11.5,-6.5 V-9 Q-11.5,-11.5 -9,-11.5 H-6.5 M6.5,-11.5 H9 Q11.5,-11.5 11.5,-9 V-6.5 M11.5,6.5 V9 Q11.5,11.5 9,11.5 H6.5 M-6.5,11.5 H-9 Q-11.5,11.5 -11.5,9 V6.5"/><path d="M0,-7.6 L6.6,-3.8 V3.8 L0,7.6 L-6.6,3.8 V-3.8 Z M-6.6,-3.8 L0,0 L6.6,-3.8 M0,0 V7.6" stroke-width="1.5"/></g></svg>
</body></html>
